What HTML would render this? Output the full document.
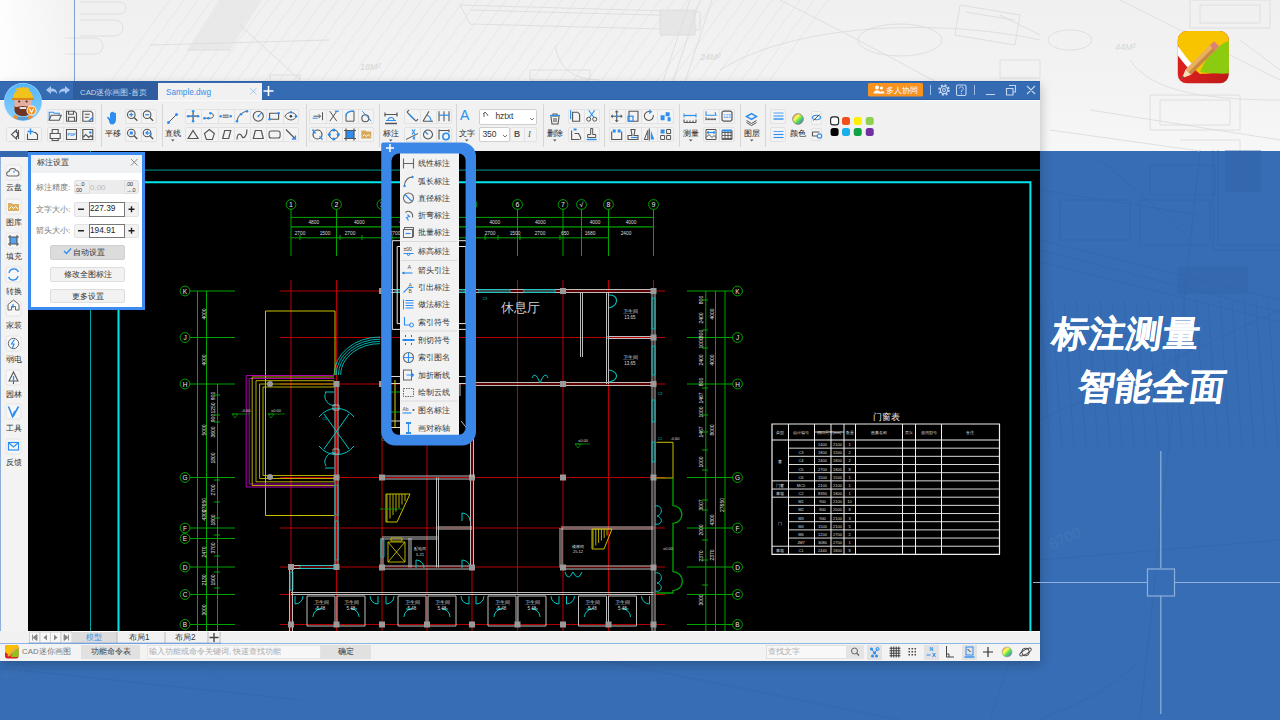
<!DOCTYPE html>
<html><head><meta charset="utf-8"><style>
*{margin:0;padding:0;box-sizing:border-box}
html,body{width:1280px;height:720px;overflow:hidden}
body{position:relative;font-family:"Liberation Sans",sans-serif;background:#376db4;color:#333}
.a{position:absolute}
svg{position:absolute;left:0;top:0;overflow:visible}
.tb{position:absolute;height:15px;border:1px solid #e2e2e2;background:#f3f3f3;border-radius:2px}
.tb i{position:absolute;top:0;bottom:0;border-left:1px solid #e2e2e2}
.lbl{position:absolute;font-size:9.5px;color:#222;white-space:nowrap;line-height:10px}
.sep{position:absolute;top:104px;height:43px;border-left:1px solid #d6d6d6}
.mi{position:absolute;left:400px;width:58px;height:17px;font-size:9px;color:#333;line-height:17px;padding-left:18px;white-space:nowrap}

</style></head><body>
<div class="a" style="left:0;top:0;width:1280px;height:151px;background:linear-gradient(180deg,#f0f0f0 0%,#f3f3f3 60%,#f7f7f7 100%)"></div>
<svg width="1280" height="151">
<defs><linearGradient id="wg" x1="0" y1="0" x2="1" y2="0"><stop offset="0" stop-color="#fff" stop-opacity="1"/><stop offset="1" stop-color="#fff" stop-opacity="0"/></linearGradient>
<linearGradient id="wg2" x1="0" y1="0" x2="0" y2="1"><stop offset="0" stop-color="#fff" stop-opacity="0"/><stop offset="1" stop-color="#fff" stop-opacity="0.6"/></linearGradient></defs>
<g stroke="#e3e3e3" stroke-width="0.8" fill="none">
<path d="M60 151 L170 0 M74 151 L184 0 M88 151 L198 0 M102 151 L212 0 M116 151 L226 0 M130 151 L240 0 M144 151 L254 0 M158 151 L268 0 M172 151 L282 0 M186 151 L296 0 M200 151 L310 0 M214 151 L324 0 M228 151 L338 0 M242 151 L352 0 M256 151 L366 0 M270 151 L380 0 M284 151 L394 0 M298 151 L408 0 M312 151 L422 0 M326 151 L436 0 M340 151 L450 0 M354 151 L464 0 M368 151 L478 0 M382 151 L492 0 M396 151 L506 0 M410 151 L520 0 M424 151 L534 0 M438 151 L548 0 M452 151 L562 0 M466 151 L576 0 M480 151 L590 0 M494 151 L604 0 M508 151 L618 0 M522 151 L632 0 M536 151 L646 0 M550 151 L660 0 M564 151 L674 0 M578 151 L688 0 M592 151 L702 0 M606 151 L716 0 M620 151 L730 0 M634 151 L744 0 M648 151 L758 0 M662 151 L772 0 M676 151 L786 0 M690 151 L800 0 M704 151 L814 0 M718 151 L828 0"/>
</g>
<path d="M219 0 H262 L230 50 H187 Z" fill="#e6e6e6" opacity="0.7"/>
<g stroke="#dcdcdc" stroke-width="0.9" fill="none">
<path d="M187 50 H230 M150 45 L330 40"/>
<path d="M80 2 h40 a6 6 0 0 1 0 12 h-40 M80 20 h35 a8 8 0 0 1 0 16 h-35 M65 38 h30 a8 8 0 0 1 0 16 h-30"/>
<path d="M240 25 L300 80 M270 75 h30 v6 h-30z"/>
<path d="M460 5 L700 12 V30 L470 24 Z M470 10 L690 16" />
<path d="M660 10 h35 v25 h-35z" fill="#e6e6e6"/>
<path d="M530 70 h60 v10 h-60z M555 45 Q560 80 600 80"/>
<path d="M690 0 L640 151 M700 0 L650 151 M712 0 L662 151"/>
<path d="M780 0 Q900 60 1040 140 M720 70 C800 20 950 20 1040 40"/>
<ellipse cx="900" cy="40" rx="42" ry="16"/>
<path d="M960 5 l60 10 l-5 30 l-60 -10z M965 12 l50 8 M1000 15 l40 20"/>
<path d="M970 95 h60 v22 h-60z M980 100 h40 M1000 60 h40 v18 h-40z"/>
<ellipse cx="1070" cy="40" rx="22" ry="10"/>
<path d="M1120 0 L1280 80 M1090 110 L1280 140 M1150 95 h90 v35 h-90z M1160 100 h70 v25 h-70z M1190 0 h80 v28 h-80z M1200 5 h60 v18 h-60z M1240 40 L1280 70 M1130 60 C1150 90 1200 100 1280 100"/>
<path d="M1050 130 L1200 151 M1180 140 h60 v11"/>
</g>
<text x="940" y="100" font-size="9" fill="#d6d6d6" font-family="Liberation Sans" font-style="italic">24M²</text>
<text x="360" y="70" font-size="9" fill="#d6d6d6" font-family="Liberation Sans" font-style="italic">18M²</text>
<text x="700" y="60" font-size="9" fill="#d6d6d6" font-family="Liberation Sans" font-style="italic">24M²</text>
<text x="1115" y="50" font-size="9" fill="#d6d6d6" font-family="Liberation Sans" font-style="italic">44M²</text>
<rect x="0" y="0" width="80" height="151" fill="url(#wg)" opacity="0.9"/>
<path d="M74.5 0 V81" stroke="#7fa0d0" stroke-width="1"/>
</svg>
<svg width="1280" height="720" style="top:0">
<g stroke="#2f62a6" stroke-width="1" fill="none" opacity="0.4">
<path d="M1040 240 L1280 300 M1040 250 L1280 312 M1040 262 L1280 322 M1040 190 L1200 215 M1100 160 C1150 200 1180 230 1200 250"/>
<path d="M1213 150 V250 H1280 M1218 150 V245 H1280 M1150 165 h65 v30 h-65z M1140 200 h70 v45 h-70z M1060 200 h70 v40 h-70z"/>
<path d="M1040 300 L1050 450 M1052 300 L1062 450 M1064 300 L1074 450 M1076 300 L1086 450 M1088 300 L1098 450 M1100 300 L1110 450 M1112 300 L1122 450 M1124 300 L1134 450 M1136 300 L1146 450 M1148 300 L1158 450 M1160 300 L1170 450 M1172 300 L1182 450 M1184 300 L1194 450 M1196 300 L1206 450 M1208 300 L1218 450 M1220 300 L1230 450 M1232 300 L1242 450 M1244 300 L1254 450 M1256 300 L1266 450 M1268 300 L1278 450"/>
<path d="M1040 420 L1280 310 M1200 150 L1140 720 M1040 560 L1280 540"/>
<path d="M0 668 L300 700 M200 660 L260 720 M600 660 L900 720 M1010 660 L990 720 M1140 660 C1100 700 1060 710 1040 720"/>
</g>
<rect x="1225" y="150" width="36" height="42" fill="#3062a6" opacity="0.4"/>
<rect x="1177" y="267" width="71" height="27" fill="#3264a8" opacity="0.4"/>
<text x="1052" y="550" font-size="15" fill="#4274b8" transform="rotate(-25 1052 550)" font-family="Liberation Sans">8700</text>
<text x="2" y="680" font-size="14" fill="#3f70b2" transform="rotate(-10 2 680)" font-family="Liberation Sans">400</text>
</svg>
<!-- window -->
<div class="a" style="left:0;top:81px;width:1040px;height:579px;background:#f1f1f1;box-shadow:1px 4px 10px rgba(0,0,0,0.22)"></div><div class="a" style="left:0;top:99.5px;width:1040px;height:1px;background:#fbfbfb"></div>
<div class="a" style="left:0;top:81px;width:1040px;height:18.5px;background:#356bb3;border-top:1px solid #2d62ab;border-bottom:1px solid #2d62ab"></div>
<div class="a" style="left:73px;top:82px;width:85px;height:17px;background:#2e5c9c"></div>
<div class="a" style="left:80px;top:83.5px;height:17px;line-height:17px;font-size:7.8px;color:#c9d6ea;white-space:nowrap">CAD迷你画图-首页</div>
<div class="a" style="left:158px;top:83px;width:104px;height:16.5px;background:#f1f1f1"></div>
<div class="a" style="left:166px;top:84.5px;height:16px;line-height:16px;font-size:8.2px;color:#3a8ee8;white-space:nowrap">Sample.dwg</div>
<svg width="1280" height="720">
<g stroke="#a8c8f0" stroke-width="1" fill="none"><path d="M250 88 L256.5 94.5 M256.5 88 L250 94.5"/></g>
<g stroke="#fff" stroke-width="1.6"><path d="M263.5 91 H273.5 M268.5 86 V96"/></g>
<!-- undo redo -->
<path d="M46 90 L51 86 V88.5 C55 88.5 57 90 57 94 C55.5 91.5 54 91.5 51 91.5 V94 Z" fill="#a8c6f0"/>
<path d="M70 90 L65 86 V88.5 C61 88.5 59 90 59 94 C60.5 91.5 62 91.5 65 91.5 V94 Z" fill="#a8c6f0"/>
<!-- avatar --><defs><clipPath id="av"><circle cx="23" cy="102" r="18.5"/></clipPath>
<linearGradient id="avg" x1="0" y1="0" x2="0" y2="1"><stop offset="0" stop-color="#4fb2f8"/><stop offset="1" stop-color="#8fd2ff"/></linearGradient></defs>
<circle cx="23" cy="102" r="19" fill="#a6dcff"/>
<g clip-path="url(#av)">
<rect x="0" y="80" width="46" height="45" fill="url(#avg)"/>
<path d="M12 122 C12 115 34 115 34 122Z" fill="#5a9ad8"/>
<path d="M12 122 L14 115 L18 116 L17 122Z M34 122 L32 115 L28 116 L29 122Z" fill="#f0902a"/>
<path d="M14.5 100 H31.5 V108 C31.5 118 14.5 118 14.5 108Z" fill="#e6ae9e"/>
<path d="M14.5 105 C15 109 18 106 23 106 C28 106 31 109 31.5 105 V110 C31 118 15 118 14.5 110Z" fill="#6e3424"/>
<rect x="19.5" y="107" width="7" height="2" rx="1" fill="#e8e8e8"/>
<circle cx="19.2" cy="101.5" r="1.1" fill="#333"/><circle cx="26.6" cy="101.5" r="1.1" fill="#333"/>
<path d="M13 98.5 C13 85.5 33 85.5 33 98.5Z" fill="#f2c21c"/>
<path d="M15 90 l1.5 -2 l1.5 1 l1.5 -2 l2 1 l2 -1.5 l2 1.5 l2 -1 l1.5 2 l1.5 1" fill="#f2c21c"/>
<path d="M12 98 H34 V100 H12Z" fill="#d9861a"/>
</g>
<circle cx="31.5" cy="110.5" r="5" fill="#fff"/><circle cx="31.5" cy="110.5" r="4.1" fill="#f7931e"/>
<path d="M29.3 108.6 L31.5 112.6 L33.7 108.6" stroke="#fff" stroke-width="1.1" fill="none"/>
<!-- right controls -->
<rect x="868" y="83" width="55" height="13.5" rx="1.5" fill="#f7931e"/>
<g fill="#fff"><circle cx="877" cy="87.5" r="2"/><path d="M873.5 93.5 C873.5 89 880.5 89 880.5 93.5Z"/><circle cx="881.5" cy="88" r="1.6"/><path d="M879.5 93.5 C880 90 884.5 90 884.5 93.5Z"/></g>
<path d="M930.5 85 V95 M974.5 85 V95" stroke="#9cbbe4" stroke-width="1"/>
<g stroke="#c4d6f0" stroke-width="1.1" fill="none">
<circle cx="944" cy="90" r="4.8" stroke-width="2" stroke-dasharray="1.9 1.87"/>
<circle cx="944" cy="90" r="3.6"/><circle cx="944" cy="90" r="1.5"/>
<rect x="956.5" y="85" width="9.5" height="10.5" rx="1.5"/>
<path d="M959.3 88.5 C959.3 86.3 963.3 86.3 963.3 88.5 C963.3 90 961.3 90 961.3 92" stroke-width="1"/>
<path d="M986 94.5 H995 M1006.5 88.5 h6.5 v6.5 h-6.5z M1009 85.5 h6.5 v6.5 h-2.5 M1027 86 L1035 94 M1035 86 L1027 94"/>
</g>
<circle cx="961.3" cy="93.7" r="0.6" fill="#c4d6f0"/>
</svg>
<div class="a" style="left:886px;top:84px;height:13.5px;line-height:13.5px;font-size:8.2px;color:#fff;white-space:nowrap">多人协同</div>
<div class="tb" style="left:5.5px;top:126.8px;width:36.0px;height:15.399999999999991px"><i style="left:17.0px"></i></div><div class="tb" style="left:47px;top:108.5px;width:49px;height:15.299999999999997px"><i style="left:15.3px"></i><i style="left:31.7px"></i></div><div class="tb" style="left:47px;top:126.8px;width:49px;height:15.399999999999991px"><i style="left:15.3px"></i><i style="left:31.7px"></i></div><div class="sep" style="left:101px"></div><div class="lbl" style="left:105px;top:128.5px;font-size:8px">平移</div><div class="tb" style="left:124.8px;top:108.5px;width:31.799999999999997px;height:15.299999999999997px"><i style="left:14.9px"></i></div><div class="tb" style="left:124.8px;top:126.8px;width:31.799999999999997px;height:15.399999999999991px"><i style="left:14.9px"></i></div><div class="sep" style="left:161.5px"></div><div class="lbl" style="left:165px;top:128.5px;font-size:8px">直线</div><div class="tb" style="left:185px;top:108.5px;width:114px;height:15.299999999999997px"><i style="left:15.3px"></i><i style="left:31.6px"></i><i style="left:47.9px"></i><i style="left:64.1px"></i><i style="left:80.4px"></i><i style="left:96.7px"></i></div><div class="tb" style="left:185px;top:126.8px;width:114px;height:15.399999999999991px"><i style="left:15.3px"></i><i style="left:31.6px"></i><i style="left:47.9px"></i><i style="left:64.1px"></i><i style="left:80.4px"></i><i style="left:96.7px"></i></div><div class="sep" style="left:305.6px"></div><div class="tb" style="left:309.4px;top:108.5px;width:65.0px;height:15.299999999999997px"><i style="left:15.2px"></i><i style="left:31.5px"></i><i style="left:47.8px"></i></div><div class="tb" style="left:309.4px;top:126.8px;width:65.0px;height:15.399999999999991px"><i style="left:15.2px"></i><i style="left:31.5px"></i><i style="left:47.8px"></i></div><div class="sep" style="left:379.4px"></div><div class="lbl" style="left:383px;top:128.5px;font-size:8px">标注</div><div class="tb" style="left:404px;top:108.5px;width:48px;height:15.299999999999997px"><i style="left:15.0px"></i><i style="left:31.0px"></i></div><div class="tb" style="left:404px;top:126.8px;width:48px;height:15.399999999999991px"><i style="left:15.0px"></i><i style="left:31.0px"></i></div><div class="sep" style="left:455.6px"></div><div class="a" style="left:460px;top:107px;font-size:14px;color:#2b8ef0;line-height:16px">A</div><div class="lbl" style="left:459px;top:128.5px;font-size:8px">文字</div><div class="a" style="left:479.4px;top:109.2px;width:58px;height:15.7px;background:#fff;border:1px solid #cfcfcf;border-radius:2px;font-size:8.5px;line-height:13.5px;padding-left:15px;color:#333">hztxt</div><div class="a" style="left:479.4px;top:127.4px;width:31px;height:15px;background:#fff;border:1px solid #cfcfcf;border-radius:2px;font-size:8.5px;line-height:13px;padding-left:2px;color:#333">350</div><div class="tb" style="left:510.4px;top:127.4px;width:27.100000000000023px;height:15.0px"><i style="left:12.6px"></i></div><div class="a" style="left:514px;top:129px;font-size:8.5px;color:#555;font-weight:bold">B</div><div class="a" style="left:528px;top:129px;font-size:8.5px;color:#555;font-style:italic;font-family:'Liberation Serif',serif">I</div><div class="sep" style="left:542.5px"></div><div class="lbl" style="left:547px;top:128.5px;font-size:8px">删除</div><div class="tb" style="left:567.5px;top:108.5px;width:32.25px;height:15.299999999999997px"><i style="left:15.1px"></i></div><div class="tb" style="left:567.5px;top:126.8px;width:32.25px;height:15.399999999999991px"><i style="left:15.1px"></i></div><div class="sep" style="left:604px"></div><div class="tb" style="left:608.5px;top:108.5px;width:65.25px;height:15.299999999999997px"><i style="left:15.3px"></i><i style="left:31.6px"></i><i style="left:47.9px"></i></div><div class="tb" style="left:608.5px;top:126.8px;width:65.25px;height:15.399999999999991px"><i style="left:15.3px"></i><i style="left:31.6px"></i><i style="left:47.9px"></i></div><div class="sep" style="left:678.75px"></div><div class="lbl" style="left:683px;top:128.5px;font-size:8px">测量</div><div class="tb" style="left:703px;top:108.5px;width:32px;height:15.299999999999997px"><i style="left:15.0px"></i></div><div class="tb" style="left:703px;top:126.8px;width:32px;height:15.399999999999991px"><i style="left:15.0px"></i></div><div class="sep" style="left:740px"></div><div class="lbl" style="left:744px;top:128.5px;font-size:8px">图层</div><div class="sep" style="left:765px"></div><div class="tb" style="left:770.4px;top:108.5px;width:16.100000000000023px;height:15.299999999999997px"></div><div class="tb" style="left:770.4px;top:126.8px;width:16.100000000000023px;height:15.399999999999991px"></div><div class="lbl" style="left:790px;top:128.5px;font-size:8px">颜色</div><div class="tb" style="left:810.6px;top:110.5px;width:11.899999999999977px;height:14.0px"></div><div class="tb" style="left:810.6px;top:128px;width:11.899999999999977px;height:12.5px"></div><svg width="1280" height="720"><g transform="translate(14.5,134.5)"><path d="M4 -4.5 V4.5 M2 -4.5 L-3 0 L2 4.5 V2 H3 V-2 H2Z" stroke="#555" stroke-width="1.1" fill="none"/></g><g transform="translate(32.5,134.5)"><path d="M-5 -1 V5 H5 V0 L3 -2 H1" stroke="#555" stroke-width="1.1" fill="none"/><path d="M-2 -6 V0 M-5 -3 H1" stroke="#2b8ef0" stroke-width="1.4" fill="none"/></g><g transform="translate(55.2,116.2)"><path d="M-6 4 V-4 H-2 L-1 -3 H4 V-1" stroke="#2b8ef0" stroke-width="1.1" fill="none"/><path d="M-6 4 L-4 -1 H6 L4 4Z" stroke="#555" stroke-width="1.1" fill="none"/></g><g transform="translate(71.5,116.2)"><path d="M-5 -5 H3 L5 -3 V5 H-5Z M-3 -5 V-2 H2 V-5 M-3 5 V1 H3 V5" stroke="#555" stroke-width="1.1" fill="none"/></g><g transform="translate(87.8,116.2)"><path d="M-5 -5 H3 L5 -3 V5 H-5Z M-3 -2 H2 M-3 1 H1" stroke="#555" stroke-width="1.1" fill="none"/><path d="M1 5 L5 1" stroke="#2b8ef0" stroke-width="1.5" fill="none"/></g><g transform="translate(55.2,134.5)"><path d="M-5 -1 H5 V4 H-5Z M-3 -1 V-5 H3 V-1 M-3 4 V6 H3 V4" stroke="#555" stroke-width="1.1" fill="none"/></g><g transform="translate(71.5,134.5)"><path d="M-5 -5 H5 V5 H-5Z" stroke="#555" stroke-width="1.1" fill="none"/><text x="-4" y="1.5" font-size="4" fill="#2b8ef0" font-family="Liberation Sans" font-weight="bold">PDF</text></g><g transform="translate(87.8,134.5)"><path d="M-5 -5 H5 V5 H-5Z M-5 3 L-2 0 L1 3 L3 1 L5 3" stroke="#555" stroke-width="1.1" fill="none"/><circle cx="2.5" cy="-2" r="1.3" fill="#2b8ef0"/></g><g transform="translate(113.0,118.5)"><path d="M-4 2 L-6 -1 L-5 -2 L-3 0 V-5 C-3 -6 -2 -6 -2 -5 V-2 V-6 C-2 -7 -1 -7 -1 -6 V-2 V-6 C-1 -7 1 -7 1 -6 V-2 V-5 C1 -6 3 -6 3 -5 V1 C3 4 1 6 -1 6 C-3 6 -4 4 -4 2Z" fill="#2b8ef0"/></g><g transform="translate(132.8,116.2)"><path d="M1 1 L4.5 4.5" stroke="#555" stroke-width="1.4" fill="none"/><circle cx="-1.5" cy="-1.5" r="3.8" stroke="#555" stroke-width="1.1" fill="none"/><path d="M-3.5 -1.5 H0.5 M-1.5 -3.5 V0.5" stroke="#2b8ef0" stroke-width="1.3" fill="none"/></g><g transform="translate(148.6,116.2)"><path d="M1 1 L4.5 4.5" stroke="#555" stroke-width="1.4" fill="none"/><circle cx="-1.5" cy="-1.5" r="3.8" stroke="#555" stroke-width="1.1" fill="none"/><path d="M-3.5 -1.5 H0.5" stroke="#2b8ef0" stroke-width="1.3" fill="none"/></g><g transform="translate(132.8,134.5)"><path d="M1 1 L4.5 4.5" stroke="#555" stroke-width="1.4" fill="none"/><circle cx="-1.5" cy="-1.5" r="3.8" stroke="#555" stroke-width="1.1" fill="none"/><rect x="-3" y="-3" width="3" height="3" fill="#2b8ef0"/></g><g transform="translate(148.6,134.5)"><path d="M1 1 L4.5 4.5" stroke="#555" stroke-width="1.4" fill="none"/><circle cx="-1.5" cy="-1.5" r="3.8" stroke="#555" stroke-width="1.1" fill="none"/><path d="M-3 -1.5 L-0.5 -3.5 M-3 -1.5 L-0.5 0 M-3 -1.5 H1 C2 -1.5 2.5 -0.5 2.5 1" stroke="#2b8ef0" stroke-width="1.2" fill="none"/></g><g transform="translate(172.5,118.5)"><path d="M-4 4 L4 -4" stroke="#555" stroke-width="1" fill="none"/><circle cx="-4" cy="4" r="1.5" fill="#2b8ef0"/><circle cx="4" cy="-4" r="1.5" fill="#2b8ef0"/></g><path d="M171 139.5 h3.5 l-1.75 2z" fill="#555"/><g transform="translate(193.1,116.2)"><path d="M0 -5 V5 M-5 0 H5" stroke="#555" stroke-width="1.2" fill="none"/><circle cx="0" cy="-5" r="1.3" fill="#2b8ef0"/><circle cx="0" cy="5" r="1.3" fill="#2b8ef0"/><circle cx="-5" cy="0" r="1.3" fill="#2b8ef0"/><circle cx="5" cy="0" r="1.3" fill="#2b8ef0"/><circle cx="0" cy="0" r="1.3" fill="#2b8ef0"/></g><g transform="translate(209.4,116.2)"><path d="M-5 2 H1 M1 -3 C5 -3 5 2 1 2" stroke="#555" stroke-width="1" fill="none"/><circle cx="-5" cy="2" r="1.3" fill="#2b8ef0"/><circle cx="-1" cy="2" r="1.3" fill="#2b8ef0"/><circle cx="1" cy="-3" r="1.3" fill="#2b8ef0"/></g><g transform="translate(225.7,116.2)"><path d="M-3 -1 H3 M-3 1 H3" stroke="#555" stroke-width="1" fill="none"/><circle cx="-5" cy="0" r="1.3" fill="#2b8ef0"/><circle cx="5" cy="0" r="1.3" fill="#2b8ef0"/></g><g transform="translate(242.0,116.2)"><path d="M-5 5 C-4 -1 0 -4 5 -5" stroke="#555" stroke-width="1" fill="none"/><circle cx="-5" cy="5" r="1.3" fill="#2b8ef0"/><circle cx="-1" cy="-2" r="1.3" fill="#2b8ef0"/><circle cx="5" cy="-5" r="1.3" fill="#2b8ef0"/></g><g transform="translate(258.3,116.2)"><circle r="5" stroke="#555" stroke-width="1.1" fill="none"/><path d="M0 0 L3 -3" stroke="#2b8ef0" stroke-width="1.1" fill="none"/><circle cx="0" cy="0" r="1" fill="#2b8ef0"/></g><g transform="translate(274.6,116.2)"><path d="M-5 -3 H4 V3 H-5Z" stroke="#555" stroke-width="1.1" fill="none"/><circle cx="-5" cy="3" r="1.3" fill="#2b8ef0"/><circle cx="4" cy="-3" r="1.3" fill="#2b8ef0"/></g><g transform="translate(290.9,116.2)"><path d="M-6 0 C-3 -5 3 -5 6 0 C3 5 -3 5 -6 0Z" stroke="#555" stroke-width="1" fill="none"/><circle cx="0" cy="0" r="1.3" fill="#333"/><circle cx="0" cy="-4" r="1.2" fill="#2b8ef0"/><circle cx="5" cy="0" r="1.2" fill="#2b8ef0"/></g><g transform="translate(193.1,134.5)"><path d="M0 -4 L5 4 H-5Z" stroke="#555" stroke-width="1.2" fill="none"/></g><g transform="translate(209.4,134.5)"><path d="M0 -5 L5 -1 L3 5 H-3 L-5 -1Z" stroke="#555" stroke-width="1.1" fill="none"/></g><g transform="translate(225.7,134.5)"><path d="M-3 4 L-1 -4 H5 L3 4Z" stroke="#555" stroke-width="1.2" fill="none"/></g><g transform="translate(242.0,134.5)"><path d="M-5 5 C-5 -2 -1 -1 0 2 C1 5 5 2 5 -5" stroke="#555" stroke-width="1.2" fill="none"/></g><g transform="translate(258.3,134.5)"><path d="M-3 -4 H3 L5 4 H-5Z" stroke="#555" stroke-width="1.2" fill="none"/></g><g transform="translate(274.6,134.5)"><rect x="-5.5" y="-3.5" width="11" height="7" rx="2" stroke="#555" stroke-width="1.1" fill="none"/></g><g transform="translate(290.9,134.5)"><path d="M-5 -5 L4 4" stroke="#555" stroke-width="1.1" fill="none"/><path d="M1 4.5 H4.5 V1" stroke="#2b8ef0" stroke-width="1.4" fill="none"/></g><g transform="translate(317.5,116.2)"><path d="M-4 0 H3 M1 -2 L3 0 L1 2 M5 -4 V4" stroke="#555" stroke-width="1" fill="none"/><path d="M-5 2 H0" stroke="#2b8ef0" stroke-width="1" fill="none"/></g><g transform="translate(333.8,116.2)"><path d="M-4 -5 L3 5 M3 -5 L-4 5" stroke="#555" stroke-width="1" fill="none"/><path d="M1 -5 H5" stroke="#2b8ef0" stroke-width="1.2" fill="none"/></g><g transform="translate(350.0,116.2)"><path d="M-4 5 V-1 C-4 -4 -1 -5 4 -5 V5Z" stroke="#555" stroke-width="1" fill="none"/><path d="M-4 0 C-4 -4 -1 -5 4 -5" stroke="#2b8ef0" stroke-width="1.2" fill="none"/></g><g transform="translate(366.3,116.2)"><circle cx="-1" cy="2" r="3.5" stroke="#555" stroke-width="1.1" fill="none"/><path d="M-4 -5 L5 5" stroke="#2b8ef0" stroke-width="1" fill="none"/></g><g transform="translate(317.5,134.5)"><circle r="4.5" stroke="#555" stroke-width="1.2" fill="none"/><path d="M-5 -5 L-2 -1 M5 5 L2 2" stroke="#2b8ef0" stroke-width="1.4" fill="none"/></g><g transform="translate(333.8,134.5)"><circle r="4.5" stroke="#555" stroke-width="1.2" fill="none"/><circle cx="-4.5" cy="0" r="1.6" fill="#2b8ef0"/><circle cx="4.5" cy="0" r="1.6" fill="#2b8ef0"/><circle cx="0" cy="-4.5" r="1.6" fill="#2b8ef0"/><circle cx="0" cy="4.5" r="1.6" fill="#2b8ef0"/></g><g transform="translate(350.0,134.5)"><rect x="-4" y="-4" width="8" height="8" fill="#2b8ef0"/><path d="M-6 -4 H6 M-6 4 H6 M-4 -6 V6 M4 -6 V6" stroke="#555" stroke-width="1.2" fill="none"/></g><g transform="translate(366.3,134.5)"><path d="M-5 -4 H-1 L0 -3 H5 V4 H-5Z" fill="#d8a858"/><path d="M-4 2 L-2 0 L0 2 L2 0 L4 2" stroke="#fff" stroke-width="1" fill="none"/></g><g transform="translate(391.0,118.5)"><path d="M-6 -4 H6 M-6 -6 V-2 M6 -6 V-2" stroke="#555" stroke-width="1.2" fill="none"/><path d="M-3 2 C-3 -2 3 -2 3 2 M-5 2 H5" stroke="#2b8ef0" stroke-width="1.1" fill="none"/><path d="M-6 5 H6" stroke="#555" stroke-width="1.5" fill="none"/></g><path d="M389 139.5 h3.5 l-1.75 2z" fill="#555"/><g transform="translate(412.0,116.2)"><path d="M-5 -4 L4 5 M-5 -4 L-3 -6 M4 5 L6 3" stroke="#555" stroke-width="1.1" fill="none"/><path d="M-3 -2 L2 3" stroke="#2b8ef0" stroke-width="1.4" fill="none"/></g><g transform="translate(428.0,116.2)"><path d="M-5 5 H5 M-5 5 L1 -5" stroke="#555" stroke-width="1.1" fill="none"/><path d="M-1 -1 C2 0 3 2 3 5" stroke="#2b8ef0" stroke-width="1.2" fill="none"/></g><g transform="translate(444.0,116.2)"><path d="M-5 -5 V5 M0 -5 V5 M5 -5 V5" stroke="#555" stroke-width="1.1" fill="none"/><path d="M-5 -1 H5" stroke="#2b8ef0" stroke-width="1.2" fill="none"/></g><g transform="translate(412.0,134.5)"><path d="M-6 5 L6 -1" stroke="#555" stroke-width="1" fill="none"/><path d="M0 -5 L3 0 M3 -5 L0 0 M1 2 L3 5 M3 2 L1 5" stroke="#2b8ef0" stroke-width="1.1" fill="none"/></g><g transform="translate(428.0,134.5)"><circle r="4.5" stroke="#555" stroke-width="1.1" fill="none"/><path d="M0 0 L-3 -3" stroke="#2b8ef0" stroke-width="1.2" fill="none"/></g><g transform="translate(444.0,134.5)"><path d="M-5 -5 V5 M5 -5 V-2 M-5 -4 H5" stroke="#555" stroke-width="1.1" fill="none"/><circle cx="2" cy="2" r="3.2" fill="none" stroke="#2b8ef0" stroke-width="1.6"/></g><path d="M465 139.5 h3.5 l-1.75 2z" fill="#555"/><path d="M530 118 l2 2 l2 -2" stroke="#555" stroke-width="0.8" fill="none"/><path d="M503 135 l2 2 l2 -2" stroke="#555" stroke-width="0.8" fill="none"/><path d="M483 114 l2 -2 l2 2 M484 113 v4 M487 114 l1 2" stroke="#555" stroke-width="0.9" fill="none"/><g transform="translate(555.0,119.0)"><path d="M-5 -3 H5 M-2 -3 V-5 H2 V-3 M-4 -2 L-3 5 H3 L4 -2 M-1 -1 V3 M1 -1 V3" stroke="#555" stroke-width="1.1" fill="none"/><path d="M-5 -3.5 H5" stroke="#2b8ef0" stroke-width="1.3" fill="none"/></g><path d="M553 139.5 h3.5 l-1.75 2z" fill="#555"/><g transform="translate(575.6,116.2)"><path d="M-3 -4 H2 L4 -2 V5 H-3Z" stroke="#555" stroke-width="1.1" fill="none"/><path d="M-5 -6 V3" stroke="#2b8ef0" stroke-width="1.2" fill="none"/></g><g transform="translate(591.7,116.2)"><path d="M-3 -6 L2 1 M3 -6 L-2 1" stroke="#2b8ef0" stroke-width="1.1" fill="none"/><circle cx="-3" cy="3" r="2" stroke="#555" fill="none"/><circle cx="3" cy="3" r="2" stroke="#555" fill="none"/></g><g transform="translate(575.6,134.5)"><path d="M-4 -4 V5 H4 M-1 -1 H3 L5 3 V5" stroke="#555" stroke-width="1.1" fill="none"/><rect x="-2" y="-6" width="3" height="2" fill="#2b8ef0"/></g><g transform="translate(591.7,134.5)"><path d="M-1 -6 H1 V0 H4 V3 H-4 V0 H-1Z" stroke="#555" stroke-width="1" fill="none"/><path d="M-5 5 H5" stroke="#2b8ef0" stroke-width="1.4" fill="none"/></g><g transform="translate(616.7,116.2)"><path d="M-5 0 H5 M0 -5 V5" stroke="#555" stroke-width="1.1" fill="none"/><path d="M-6 0 l2 -2 v4z M6 0 l-2 -2 v4z M0 -6 l-2 2 h4z M0 6 l-2 -2 h4z" fill="#555"/><circle cx="0" cy="0" r="1.2" fill="#2b8ef0"/></g><g transform="translate(633.0,116.2)"><path d="M-4 -5 H5 V5 H-4Z" stroke="#555" stroke-width="1.1" fill="none"/><rect x="-5" y="0" width="5" height="5" fill="none" stroke="#2b8ef0" stroke-width="1.2"/></g><g transform="translate(649.3,116.2)"><path d="M4 -1 A4.5 4.5 0 1 1 1 -4.5" stroke="#555" stroke-width="1.1" fill="none"/><path d="M0 -7 L3 -4.5 L0 -2Z" fill="#2b8ef0"/></g><g transform="translate(665.6,116.2)"><path d="M-5 -1 h4 v5 h-4z M0 -4 h4 v4 h-4z M2 1 h3 v4 h-3z" fill="#2b8ef0"/></g><g transform="translate(616.7,134.5)"><path d="M-5 -3 V5 H5 V-3" stroke="#555" stroke-width="1.1" fill="none"/><rect x="-4" y="-5" width="3" height="3" fill="#2b8ef0"/><rect x="1" y="-5" width="3" height="3" fill="#2b8ef0"/></g><g transform="translate(633.0,134.5)"><path d="M-5 5 V1 H-1 L-2 -5 H2 L1 1 H5 V5Z" stroke="#555" stroke-width="1.1" fill="none"/><path d="M-2 3 H5" stroke="#2b8ef0" stroke-width="1.2" fill="none"/></g><g transform="translate(649.3,134.5)"><path d="M0 -6 V6" stroke="#555" stroke-width="1.1" fill="none"/><path d="M-1.5 -4 L-5 5 H-1.5Z" fill="none" stroke="#555"/><path d="M1.5 -4 L5 5 H1.5Z" fill="#2b8ef0"/></g><g transform="translate(665.6,134.5)"><rect x="-5" y="-5" width="4" height="4" fill="#2b8ef0"/><path d="M1 -5 h4 v4 h-4z M-5 1 h4 v4 h-4z M1 1 h4 v4 h-4z" stroke="#555" stroke-width="1" fill="none"/></g><g transform="translate(690.0,118.5)"><path d="M-6 -3 H6" stroke="#2b8ef0" stroke-width="1.2" fill="none"/><path d="M-6 -5 V-1 M6 -5 V-1" stroke="#2b8ef0" stroke-width="1" fill="none"/><path d="M-6 4 H6 M-6 1 V4 M-3 2 V4 M0 2 V4 M3 2 V4 M6 1 V4" stroke="#555" stroke-width="1.1" fill="none"/></g><path d="M689 139.5 h3.5 l-1.75 2z" fill="#555"/><g transform="translate(711.0,116.2)"><path d="M-5 -5 V-1 H5 L4 -4" stroke="#2b8ef0" stroke-width="1.1" fill="none"/><path d="M-5 3 H5 M-5 1 V4 M-2 2 V4 M1 2 V4 M4 2 V4" stroke="#555" stroke-width="1.1" fill="none"/></g><g transform="translate(727.0,116.2)"><rect x="-5" y="-5" width="10" height="10" rx="2" stroke="#555" stroke-width="1.2" fill="none"/><text x="-3.7" y="1.8" font-size="4.5" fill="#2b8ef0" font-family="Liberation Sans">123</text></g><g transform="translate(711.0,134.5)"><path d="M-5 -5 H5 V5 H-5Z M-5 3 L-2 0 L1 3 L3 1 L5 3" stroke="#555" stroke-width="1" fill="none"/><path d="M-3 -2 H3" stroke="#2b8ef0" stroke-width="1.2" fill="none"/><circle cx="-3" cy="-2" r="1.2" fill="#2b8ef0"/><circle cx="3" cy="-2" r="1.2" fill="#2b8ef0"/></g><g transform="translate(727.0,134.5)"><path d="M-5 -2 H5 M-5 1 H5 M-5 4 H5 M-2 -4 V5 M1 -4 V5 M4 -4 V5 M-5 -4 V5 H5 V-4" stroke="#555" stroke-width="0.9" fill="none"/><rect x="-5" y="-5" width="10" height="2" fill="#2b8ef0"/></g><g transform="translate(751.5,118.5)"><path d="M-5 2 L0 5 L5 2 M-5 4 L0 7 L5 4" stroke="#555" stroke-width="1" fill="none"/><path d="M-5 -2 L0 -5 L5 -2 L0 1Z" fill="none" stroke="#2b8ef0" stroke-width="1.5"/></g><path d="M750 139.5 h3.5 l-1.75 2z" fill="#555"/><g transform="translate(778.5,116.0)"><path d="M-5 -3 H5" stroke="#2b8ef0" stroke-width="0.8" fill="none"/><path d="M-5 0 H5" stroke="#2b8ef0" stroke-width="1" fill="none"/><path d="M-5 3 H5" stroke="#2b8ef0" stroke-width="1.4" fill="none"/></g><g transform="translate(778.5,134.5)"><path d="M-5 -3 H5" stroke="#2b8ef0" stroke-width="0.8" fill="none"/><path d="M-5 0 H5" stroke="#2b8ef0" stroke-width="1.1" fill="none"/><path d="M-5 3 H5" stroke="#2b8ef0" stroke-width="1.1" fill="none"/></g><defs><linearGradient id="cw" x1="0" y1="0" x2="1" y2="1"><stop offset="0" stop-color="#f55"/><stop offset=".35" stop-color="#ff5"/><stop offset=".6" stop-color="#5d5"/><stop offset="1" stop-color="#55f"/></linearGradient></defs><circle cx="798" cy="119" r="5.3" fill="url(#cw)" stroke="#777" stroke-width="0.8"/><g transform="translate(816.5,117.5)"><path d="M-4 0 C-4 -3 4 -3 4 0 C4 3 -4 3 -4 0" stroke="#2b8ef0" stroke-width="1.1" fill="none"/><path d="M-3 3 L3 -3" stroke="#555" stroke-width="1" fill="none"/></g><g transform="translate(816.5,134.0)"><path d="M-4 -2 H3 M-4 -2 V2 H1" stroke="#555" stroke-width="1" fill="none"/><circle cx="3" cy="2" r="2.2" fill="none" stroke="#2b8ef0" stroke-width="1.2"/></g><rect x="830.6" y="116.9" width="8" height="8" rx="2.5" fill="#fff" stroke="#222" stroke-width="1.1"/><rect x="842" y="116.9" width="8" height="8" rx="2.5" fill="#f04e1a"/><rect x="853.75" y="116.9" width="8" height="8" rx="2.5" fill="#ffef00"/><rect x="865.75" y="116.9" width="8" height="8" rx="2.5" fill="#8fd14f"/><rect x="830.6" y="128" width="8" height="8" rx="2.5" fill="#000"/><rect x="842" y="128" width="8" height="8" rx="2.5" fill="#18aeea"/><rect x="853.75" y="128" width="8" height="8" rx="2.5" fill="#10a544"/><rect x="865.75" y="128" width="8" height="8" rx="2.5" fill="#7030a0"/></svg><svg width="1280" height="720" font-family="Liberation Sans"><defs><clipPath id="cv"><rect x="28" y="151" width="1012" height="480"/></clipPath></defs><rect x="28" y="151" width="1012" height="480" fill="#000"/><g clip-path="url(#cv)"><line x1="28" y1="170.2" x2="1040" y2="170.2" stroke="#007a7a" stroke-width="1.3"/><line x1="90.5" y1="150" x2="90.5" y2="631" stroke="#00a4a4" stroke-width="1"/><path d="M118.5 631 V182.2 H1030.4 V631" stroke="#00e6ee" stroke-width="2" fill="none"/><line x1="280" y1="291" x2="665" y2="291" stroke="#b40000" stroke-width="1.1"/><line x1="280" y1="337.5" x2="665" y2="337.5" stroke="#b40000" stroke-width="1.1"/><line x1="280" y1="384" x2="665" y2="384" stroke="#b40000" stroke-width="1.1"/><line x1="280" y1="477.5" x2="665" y2="477.5" stroke="#b40000" stroke-width="1.1"/><line x1="280" y1="528" x2="665" y2="528" stroke="#b40000" stroke-width="1.1"/><line x1="280" y1="567" x2="665" y2="567" stroke="#b40000" stroke-width="1.1"/><line x1="280" y1="594.5" x2="665" y2="594.5" stroke="#b40000" stroke-width="1.1"/><line x1="280" y1="624.5" x2="665" y2="624.5" stroke="#b40000" stroke-width="1.1"/><line x1="291" y1="280" x2="291" y2="631" stroke="#b40000" stroke-width="1.1"/><line x1="336.5" y1="280" x2="336.5" y2="631" stroke="#b40000" stroke-width="1.1"/><line x1="382" y1="280" x2="382" y2="631" stroke="#b40000" stroke-width="1.1"/><line x1="427" y1="280" x2="427" y2="631" stroke="#b40000" stroke-width="1.1"/><line x1="472" y1="280" x2="472" y2="631" stroke="#b40000" stroke-width="1.1"/><line x1="517.5" y1="280" x2="517.5" y2="631" stroke="#b40000" stroke-width="1.1"/><line x1="563" y1="280" x2="563" y2="631" stroke="#b40000" stroke-width="1.1"/><line x1="608.5" y1="280" x2="608.5" y2="631" stroke="#b40000" stroke-width="1.1"/><line x1="653.5" y1="280" x2="653.5" y2="631" stroke="#b40000" stroke-width="1.1"/><circle cx="291" cy="204.5" r="4.9" stroke="#00a400" stroke-width="1" fill="none"/><text x="291" y="207" font-size="7" fill="#e8e8e8" text-anchor="middle">1</text><line x1="291" y1="209.5" x2="291" y2="256" stroke="#00a400" stroke-width="1"/><circle cx="336.5" cy="204.5" r="4.9" stroke="#00a400" stroke-width="1" fill="none"/><text x="336.5" y="207" font-size="7" fill="#e8e8e8" text-anchor="middle">2</text><line x1="336.5" y1="209.5" x2="336.5" y2="256" stroke="#00a400" stroke-width="1"/><circle cx="382" cy="204.5" r="4.9" stroke="#00a400" stroke-width="1" fill="none"/><text x="382" y="207" font-size="7" fill="#e8e8e8" text-anchor="middle">3</text><line x1="382" y1="209.5" x2="382" y2="256" stroke="#00a400" stroke-width="1"/><circle cx="427" cy="204.5" r="4.9" stroke="#00a400" stroke-width="1" fill="none"/><text x="427" y="207" font-size="7" fill="#e8e8e8" text-anchor="middle">4</text><line x1="427" y1="209.5" x2="427" y2="256" stroke="#00a400" stroke-width="1"/><circle cx="472" cy="204.5" r="4.9" stroke="#00a400" stroke-width="1" fill="none"/><text x="472" y="207" font-size="7" fill="#e8e8e8" text-anchor="middle">5</text><line x1="472" y1="209.5" x2="472" y2="256" stroke="#00a400" stroke-width="1"/><circle cx="517.5" cy="204.5" r="4.9" stroke="#00a400" stroke-width="1" fill="none"/><text x="517.5" y="207" font-size="7" fill="#e8e8e8" text-anchor="middle">6</text><line x1="517.5" y1="209.5" x2="517.5" y2="256" stroke="#00a400" stroke-width="1"/><circle cx="563" cy="204.5" r="4.9" stroke="#00a400" stroke-width="1" fill="none"/><text x="563" y="207" font-size="7" fill="#e8e8e8" text-anchor="middle">7</text><line x1="563" y1="209.5" x2="563" y2="256" stroke="#00a400" stroke-width="1"/><circle cx="581.5" cy="204.5" r="4.9" stroke="#00a400" stroke-width="1" fill="none"/><text x="581.5" y="207" font-size="7" fill="#e8e8e8" text-anchor="middle">√</text><line x1="581.5" y1="209.5" x2="581.5" y2="256" stroke="#00a400" stroke-width="1"/><circle cx="608.5" cy="204.5" r="4.9" stroke="#00a400" stroke-width="1" fill="none"/><text x="608.5" y="207" font-size="7" fill="#e8e8e8" text-anchor="middle">8</text><line x1="608.5" y1="209.5" x2="608.5" y2="256" stroke="#00a400" stroke-width="1"/><circle cx="653.5" cy="204.5" r="4.9" stroke="#00a400" stroke-width="1" fill="none"/><text x="653.5" y="207" font-size="7" fill="#e8e8e8" text-anchor="middle">9</text><line x1="653.5" y1="209.5" x2="653.5" y2="256" stroke="#00a400" stroke-width="1"/><line x1="291" y1="217.4" x2="653.5" y2="217.4" stroke="#00a400" stroke-width="1"/><line x1="291" y1="226.8" x2="653.5" y2="226.8" stroke="#00a400" stroke-width="1.2"/><line x1="291" y1="237.8" x2="608.5" y2="237.8" stroke="#00a400" stroke-width="1"/><text x="313.75" y="224" font-size="4.8" fill="#ddd" text-anchor="middle">4800</text><text x="359.25" y="224" font-size="4.8" fill="#ddd" text-anchor="middle">4000</text><text x="404.5" y="224" font-size="4.8" fill="#ddd" text-anchor="middle">4000</text><text x="449.5" y="224" font-size="4.8" fill="#ddd" text-anchor="middle">4000</text><text x="494.75" y="224" font-size="4.8" fill="#ddd" text-anchor="middle">4000</text><text x="540.25" y="224" font-size="4.8" fill="#ddd" text-anchor="middle">4000</text><text x="595.0" y="224" font-size="4.8" fill="#ddd" text-anchor="middle">4000</text><text x="631.0" y="224" font-size="4.8" fill="#ddd" text-anchor="middle">4000</text><text x="300" y="235" font-size="4.8" fill="#ddd" text-anchor="middle">2700</text><text x="325" y="235" font-size="4.8" fill="#ddd" text-anchor="middle">1500</text><text x="350" y="235" font-size="4.8" fill="#ddd" text-anchor="middle">2700</text><text x="395" y="235" font-size="4.8" fill="#ddd" text-anchor="middle">2700</text><text x="420" y="235" font-size="4.8" fill="#ddd" text-anchor="middle">1500</text><text x="445" y="235" font-size="4.8" fill="#ddd" text-anchor="middle">2700</text><text x="490" y="235" font-size="4.8" fill="#ddd" text-anchor="middle">2700</text><text x="515" y="235" font-size="4.8" fill="#ddd" text-anchor="middle">1500</text><text x="540" y="235" font-size="4.8" fill="#ddd" text-anchor="middle">2700</text><text x="565" y="235" font-size="4.8" fill="#ddd" text-anchor="middle">650</text><text x="590" y="235" font-size="4.8" fill="#ddd" text-anchor="middle">1680</text><text x="626" y="235" font-size="4.8" fill="#ddd" text-anchor="middle">2400</text><line x1="300" y1="235" x2="300" y2="240" stroke="#00a400" stroke-width="1"/><line x1="340" y1="235" x2="340" y2="240" stroke="#00a400" stroke-width="1"/><line x1="362" y1="235" x2="362" y2="240" stroke="#00a400" stroke-width="1"/><line x1="392" y1="235" x2="392" y2="240" stroke="#00a400" stroke-width="1"/><line x1="430" y1="235" x2="430" y2="240" stroke="#00a400" stroke-width="1"/><line x1="454" y1="235" x2="454" y2="240" stroke="#00a400" stroke-width="1"/><line x1="485" y1="235" x2="485" y2="240" stroke="#00a400" stroke-width="1"/><line x1="498" y1="235" x2="498" y2="240" stroke="#00a400" stroke-width="1"/><line x1="520" y1="235" x2="520" y2="240" stroke="#00a400" stroke-width="1"/><line x1="560" y1="235" x2="560" y2="240" stroke="#00a400" stroke-width="1"/><circle cx="185" cy="291" r="4.9" stroke="#00a400" stroke-width="1" fill="none"/><text x="185" y="293.5" font-size="6.5" fill="#e8e8e8" text-anchor="middle">K</text><line x1="190" y1="291" x2="235" y2="291" stroke="#00a400" stroke-width="1"/><circle cx="185" cy="337.5" r="4.9" stroke="#00a400" stroke-width="1" fill="none"/><text x="185" y="340.0" font-size="6.5" fill="#e8e8e8" text-anchor="middle">J</text><line x1="190" y1="337.5" x2="235" y2="337.5" stroke="#00a400" stroke-width="1"/><circle cx="185" cy="384" r="4.9" stroke="#00a400" stroke-width="1" fill="none"/><text x="185" y="386.5" font-size="6.5" fill="#e8e8e8" text-anchor="middle">H</text><line x1="190" y1="384" x2="235" y2="384" stroke="#00a400" stroke-width="1"/><circle cx="185" cy="477.5" r="4.9" stroke="#00a400" stroke-width="1" fill="none"/><text x="185" y="480.0" font-size="6.5" fill="#e8e8e8" text-anchor="middle">G</text><line x1="190" y1="477.5" x2="235" y2="477.5" stroke="#00a400" stroke-width="1"/><circle cx="185" cy="528" r="4.9" stroke="#00a400" stroke-width="1" fill="none"/><text x="185" y="530.5" font-size="6.5" fill="#e8e8e8" text-anchor="middle">F</text><line x1="190" y1="528" x2="235" y2="528" stroke="#00a400" stroke-width="1"/><circle cx="185" cy="538.5" r="4.9" stroke="#00a400" stroke-width="1" fill="none"/><text x="185" y="541.0" font-size="6.5" fill="#e8e8e8" text-anchor="middle">E</text><line x1="190" y1="538.5" x2="235" y2="538.5" stroke="#00a400" stroke-width="1"/><circle cx="185" cy="567" r="4.9" stroke="#00a400" stroke-width="1" fill="none"/><text x="185" y="569.5" font-size="6.5" fill="#e8e8e8" text-anchor="middle">D</text><line x1="190" y1="567" x2="235" y2="567" stroke="#00a400" stroke-width="1"/><circle cx="185" cy="594.5" r="4.9" stroke="#00a400" stroke-width="1" fill="none"/><text x="185" y="597.0" font-size="6.5" fill="#e8e8e8" text-anchor="middle">C</text><line x1="190" y1="594.5" x2="235" y2="594.5" stroke="#00a400" stroke-width="1"/><circle cx="185" cy="624.5" r="4.9" stroke="#00a400" stroke-width="1" fill="none"/><text x="185" y="627.0" font-size="6.5" fill="#e8e8e8" text-anchor="middle">B</text><line x1="190" y1="624.5" x2="235" y2="624.5" stroke="#00a400" stroke-width="1"/><line x1="197.5" y1="291" x2="197.5" y2="631" stroke="#00a400" stroke-width="1"/><line x1="206.5" y1="291" x2="206.5" y2="631" stroke="#00a400" stroke-width="1"/><line x1="217.5" y1="384" x2="217.5" y2="631" stroke="#00a400" stroke-width="1"/><text x="206" y="314" font-size="5" fill="#e4e4e4" text-anchor="middle" transform="rotate(-90 206 314)">4000</text><text x="206" y="360" font-size="5" fill="#e4e4e4" text-anchor="middle" transform="rotate(-90 206 360)">4000</text><text x="206" y="430" font-size="5" fill="#e4e4e4" text-anchor="middle" transform="rotate(-90 206 430)">5000</text><text x="206" y="505" font-size="5" fill="#e4e4e4" text-anchor="middle" transform="rotate(-90 206 505)">27650</text><text x="206" y="515" font-size="5" fill="#e4e4e4" text-anchor="middle" transform="rotate(-90 206 515)">4300</text><text x="206" y="552" font-size="5" fill="#e4e4e4" text-anchor="middle" transform="rotate(-90 206 552)">2470</text><text x="206" y="580" font-size="5" fill="#e4e4e4" text-anchor="middle" transform="rotate(-90 206 580)">2130</text><text x="206" y="610" font-size="5" fill="#e4e4e4" text-anchor="middle" transform="rotate(-90 206 610)">3000</text><text x="215" y="396" font-size="5" fill="#e4e4e4" text-anchor="middle" transform="rotate(-90 215 396)">900</text><text x="215" y="408" font-size="5" fill="#e4e4e4" text-anchor="middle" transform="rotate(-90 215 408)">1250</text><text x="215" y="418" font-size="5" fill="#e4e4e4" text-anchor="middle" transform="rotate(-90 215 418)">900</text><text x="215" y="432" font-size="5" fill="#e4e4e4" text-anchor="middle" transform="rotate(-90 215 432)">3600</text><text x="215" y="458" font-size="5" fill="#e4e4e4" text-anchor="middle" transform="rotate(-90 215 458)">1800</text><text x="215" y="490" font-size="5" fill="#e4e4e4" text-anchor="middle" transform="rotate(-90 215 490)">2700</text><text x="215" y="520" font-size="5" fill="#e4e4e4" text-anchor="middle" transform="rotate(-90 215 520)">1800</text><text x="215" y="548" font-size="5" fill="#e4e4e4" text-anchor="middle" transform="rotate(-90 215 548)">3700</text><text x="215" y="580" font-size="5" fill="#e4e4e4" text-anchor="middle" transform="rotate(-90 215 580)">1500</text><line x1="214" y1="395" x2="220" y2="395" stroke="#00a400" stroke-width="1"/><line x1="214" y1="415" x2="220" y2="415" stroke="#00a400" stroke-width="1"/><line x1="214" y1="422" x2="220" y2="422" stroke="#00a400" stroke-width="1"/><line x1="214" y1="480" x2="220" y2="480" stroke="#00a400" stroke-width="1"/><line x1="214" y1="502" x2="220" y2="502" stroke="#00a400" stroke-width="1"/><line x1="214" y1="518" x2="220" y2="518" stroke="#00a400" stroke-width="1"/><line x1="214" y1="535" x2="220" y2="535" stroke="#00a400" stroke-width="1"/><line x1="214" y1="556" x2="220" y2="556" stroke="#00a400" stroke-width="1"/><line x1="214" y1="572" x2="220" y2="572" stroke="#00a400" stroke-width="1"/><line x1="214" y1="588" x2="220" y2="588" stroke="#00a400" stroke-width="1"/><circle cx="737.5" cy="291" r="4.9" stroke="#00a400" stroke-width="1" fill="none"/><text x="737.5" y="293.5" font-size="6.5" fill="#e8e8e8" text-anchor="middle">K</text><line x1="687" y1="291" x2="733" y2="291" stroke="#00a400" stroke-width="1"/><circle cx="737.5" cy="337.5" r="4.9" stroke="#00a400" stroke-width="1" fill="none"/><text x="737.5" y="340.0" font-size="6.5" fill="#e8e8e8" text-anchor="middle">J</text><line x1="687" y1="337.5" x2="733" y2="337.5" stroke="#00a400" stroke-width="1"/><circle cx="737.5" cy="384" r="4.9" stroke="#00a400" stroke-width="1" fill="none"/><text x="737.5" y="386.5" font-size="6.5" fill="#e8e8e8" text-anchor="middle">H</text><line x1="687" y1="384" x2="733" y2="384" stroke="#00a400" stroke-width="1"/><circle cx="737.5" cy="477.5" r="4.9" stroke="#00a400" stroke-width="1" fill="none"/><text x="737.5" y="480.0" font-size="6.5" fill="#e8e8e8" text-anchor="middle">G</text><line x1="687" y1="477.5" x2="733" y2="477.5" stroke="#00a400" stroke-width="1"/><circle cx="737.5" cy="528" r="4.9" stroke="#00a400" stroke-width="1" fill="none"/><text x="737.5" y="530.5" font-size="6.5" fill="#e8e8e8" text-anchor="middle">F</text><line x1="687" y1="528" x2="733" y2="528" stroke="#00a400" stroke-width="1"/><circle cx="737.5" cy="567" r="4.9" stroke="#00a400" stroke-width="1" fill="none"/><text x="737.5" y="569.5" font-size="6.5" fill="#e8e8e8" text-anchor="middle">D</text><line x1="687" y1="567" x2="733" y2="567" stroke="#00a400" stroke-width="1"/><circle cx="737.5" cy="594.5" r="4.9" stroke="#00a400" stroke-width="1" fill="none"/><text x="737.5" y="597.0" font-size="6.5" fill="#e8e8e8" text-anchor="middle">C</text><line x1="687" y1="594.5" x2="733" y2="594.5" stroke="#00a400" stroke-width="1"/><circle cx="737.5" cy="624.5" r="4.9" stroke="#00a400" stroke-width="1" fill="none"/><text x="737.5" y="627.0" font-size="6.5" fill="#e8e8e8" text-anchor="middle">B</text><line x1="687" y1="624.5" x2="733" y2="624.5" stroke="#00a400" stroke-width="1"/><line x1="705.8" y1="291" x2="705.8" y2="631" stroke="#00a400" stroke-width="1"/><line x1="715.5" y1="291" x2="715.5" y2="631" stroke="#00a400" stroke-width="1"/><line x1="725" y1="291" x2="725" y2="631" stroke="#00a400" stroke-width="1"/><text x="703" y="300" font-size="5" fill="#e4e4e4" text-anchor="middle" transform="rotate(-90 703 300)">800</text><text x="703" y="318" font-size="5" fill="#e4e4e4" text-anchor="middle" transform="rotate(-90 703 318)">2400</text><text x="703" y="334" font-size="5" fill="#e4e4e4" text-anchor="middle" transform="rotate(-90 703 334)">800</text><text x="703" y="343" font-size="5" fill="#e4e4e4" text-anchor="middle" transform="rotate(-90 703 343)">1000</text><text x="703" y="360" font-size="5" fill="#e4e4e4" text-anchor="middle" transform="rotate(-90 703 360)">2400</text><text x="703" y="382" font-size="5" fill="#e4e4e4" text-anchor="middle" transform="rotate(-90 703 382)">800</text><text x="703" y="398" font-size="5" fill="#e4e4e4" text-anchor="middle" transform="rotate(-90 703 398)">1467</text><text x="703" y="412" font-size="5" fill="#e4e4e4" text-anchor="middle" transform="rotate(-90 703 412)">1000</text><text x="703" y="432" font-size="5" fill="#e4e4e4" text-anchor="middle" transform="rotate(-90 703 432)">1467</text><text x="703" y="462" font-size="5" fill="#e4e4e4" text-anchor="middle" transform="rotate(-90 703 462)">1000</text><text x="703" y="505" font-size="5" fill="#e4e4e4" text-anchor="middle" transform="rotate(-90 703 505)">3007</text><text x="703" y="530" font-size="5" fill="#e4e4e4" text-anchor="middle" transform="rotate(-90 703 530)">2000</text><text x="703" y="556" font-size="5" fill="#e4e4e4" text-anchor="middle" transform="rotate(-90 703 556)">2370</text><text x="703" y="600" font-size="5" fill="#e4e4e4" text-anchor="middle" transform="rotate(-90 703 600)">3000</text><text x="714" y="314" font-size="5" fill="#e4e4e4" text-anchor="middle" transform="rotate(-90 714 314)">4000</text><text x="714" y="360" font-size="5" fill="#e4e4e4" text-anchor="middle" transform="rotate(-90 714 360)">4000</text><text x="714" y="430" font-size="5" fill="#e4e4e4" text-anchor="middle" transform="rotate(-90 714 430)">8000</text><text x="714" y="520" font-size="5" fill="#e4e4e4" text-anchor="middle" transform="rotate(-90 714 520)">4300</text><text x="714" y="555" font-size="5" fill="#e4e4e4" text-anchor="middle" transform="rotate(-90 714 555)">2370</text><text x="724" y="505" font-size="5" fill="#e4e4e4" text-anchor="middle" transform="rotate(-90 724 505)">27650</text><line x1="702" y1="300" x2="708" y2="300" stroke="#00a400" stroke-width="1"/><line x1="702" y1="330" x2="708" y2="330" stroke="#00a400" stroke-width="1"/><line x1="702" y1="348" x2="708" y2="348" stroke="#00a400" stroke-width="1"/><line x1="702" y1="388" x2="708" y2="388" stroke="#00a400" stroke-width="1"/><line x1="702" y1="415" x2="708" y2="415" stroke="#00a400" stroke-width="1"/><line x1="702" y1="432" x2="708" y2="432" stroke="#00a400" stroke-width="1"/><line x1="702" y1="450" x2="708" y2="450" stroke="#00a400" stroke-width="1"/><line x1="702" y1="470" x2="708" y2="470" stroke="#00a400" stroke-width="1"/><line x1="702" y1="500" x2="708" y2="500" stroke="#00a400" stroke-width="1"/><line x1="702" y1="510" x2="708" y2="510" stroke="#00a400" stroke-width="1"/><line x1="702" y1="540" x2="708" y2="540" stroke="#00a400" stroke-width="1"/><line x1="702" y1="560" x2="708" y2="560" stroke="#00a400" stroke-width="1"/><line x1="702" y1="585" x2="708" y2="585" stroke="#00a400" stroke-width="1"/><line x1="382" y1="289.5" x2="653.5" y2="289.5" stroke="#bdbdbd" stroke-width="1"/><line x1="382" y1="292.5" x2="653.5" y2="292.5" stroke="#bdbdbd" stroke-width="1"/><line x1="652.0" y1="291" x2="652.0" y2="631" stroke="#bdbdbd" stroke-width="1"/><line x1="655.0" y1="291" x2="655.0" y2="631" stroke="#bdbdbd" stroke-width="1"/><line x1="472" y1="382.5" x2="653.5" y2="382.5" stroke="#bdbdbd" stroke-width="1"/><line x1="472" y1="385.5" x2="653.5" y2="385.5" stroke="#bdbdbd" stroke-width="1"/><line x1="580.5" y1="293" x2="580.5" y2="357" stroke="#bdbdbd" stroke-width="1"/><line x1="582.5" y1="293" x2="582.5" y2="357" stroke="#bdbdbd" stroke-width="1"/><line x1="606.5" y1="293" x2="606.5" y2="384" stroke="#bdbdbd" stroke-width="1"/><line x1="608.5" y1="293" x2="608.5" y2="384" stroke="#bdbdbd" stroke-width="1"/><line x1="607.5" y1="336.5" x2="653.5" y2="336.5" stroke="#bdbdbd" stroke-width="1"/><line x1="607.5" y1="338.5" x2="653.5" y2="338.5" stroke="#bdbdbd" stroke-width="1"/><line x1="335.0" y1="384" x2="335.0" y2="567" stroke="#bdbdbd" stroke-width="1"/><line x1="338.0" y1="384" x2="338.0" y2="567" stroke="#bdbdbd" stroke-width="1"/><line x1="291" y1="565.5" x2="336.5" y2="565.5" stroke="#bdbdbd" stroke-width="1"/><line x1="291" y1="568.5" x2="336.5" y2="568.5" stroke="#bdbdbd" stroke-width="1"/><line x1="289.5" y1="567" x2="289.5" y2="631" stroke="#bdbdbd" stroke-width="1"/><line x1="292.5" y1="567" x2="292.5" y2="631" stroke="#bdbdbd" stroke-width="1"/><line x1="382" y1="476.0" x2="472" y2="476.0" stroke="#bdbdbd" stroke-width="1"/><line x1="382" y1="479.0" x2="472" y2="479.0" stroke="#bdbdbd" stroke-width="1"/><line x1="470.5" y1="477.5" x2="470.5" y2="567.5" stroke="#bdbdbd" stroke-width="1"/><line x1="473.5" y1="477.5" x2="473.5" y2="567.5" stroke="#bdbdbd" stroke-width="1"/><line x1="436.5" y1="477.5" x2="436.5" y2="567.5" stroke="#bdbdbd" stroke-width="1"/><line x1="438.5" y1="477.5" x2="438.5" y2="567.5" stroke="#bdbdbd" stroke-width="1"/><line x1="437.5" y1="527" x2="472" y2="527" stroke="#bdbdbd" stroke-width="1"/><line x1="437.5" y1="529" x2="472" y2="529" stroke="#bdbdbd" stroke-width="1"/><line x1="382" y1="537" x2="437.5" y2="537" stroke="#bdbdbd" stroke-width="1"/><line x1="382" y1="539" x2="437.5" y2="539" stroke="#bdbdbd" stroke-width="1"/><line x1="381" y1="538" x2="381" y2="567.5" stroke="#bdbdbd" stroke-width="1"/><line x1="383" y1="538" x2="383" y2="567.5" stroke="#bdbdbd" stroke-width="1"/><line x1="409" y1="538" x2="409" y2="567.5" stroke="#bdbdbd" stroke-width="1"/><line x1="411" y1="538" x2="411" y2="567.5" stroke="#bdbdbd" stroke-width="1"/><line x1="382" y1="566.0" x2="472" y2="566.0" stroke="#bdbdbd" stroke-width="1"/><line x1="382" y1="569.0" x2="472" y2="569.0" stroke="#bdbdbd" stroke-width="1"/><line x1="561" y1="527" x2="653.5" y2="527" stroke="#bdbdbd" stroke-width="1"/><line x1="561" y1="529" x2="653.5" y2="529" stroke="#bdbdbd" stroke-width="1"/><line x1="560" y1="528" x2="560" y2="567.5" stroke="#bdbdbd" stroke-width="1"/><line x1="562" y1="528" x2="562" y2="567.5" stroke="#bdbdbd" stroke-width="1"/><line x1="561" y1="566.0" x2="653.5" y2="566.0" stroke="#bdbdbd" stroke-width="1"/><line x1="561" y1="569.0" x2="653.5" y2="569.0" stroke="#bdbdbd" stroke-width="1"/><line x1="291" y1="592.5" x2="653.5" y2="592.5" stroke="#bdbdbd" stroke-width="1"/><line x1="291" y1="594.5" x2="653.5" y2="594.5" stroke="#bdbdbd" stroke-width="1"/><path d="M307 596 H335 V626 H307Z" stroke="#bdbdbd" stroke-width="1" fill="none"/><path d="M337 596 H365 V626 H337Z" stroke="#bdbdbd" stroke-width="1" fill="none"/><path d="M398 596 H426 V626 H398Z" stroke="#bdbdbd" stroke-width="1" fill="none"/><path d="M428 596 H456 V626 H428Z" stroke="#bdbdbd" stroke-width="1" fill="none"/><path d="M488 596 H516 V626 H488Z" stroke="#bdbdbd" stroke-width="1" fill="none"/><path d="M518 596 H546 V626 H518Z" stroke="#bdbdbd" stroke-width="1" fill="none"/><path d="M578.5 596 H606.5 V626 H578.5Z" stroke="#bdbdbd" stroke-width="1" fill="none"/><path d="M608.5 596 H636.5 V626 H608.5Z" stroke="#bdbdbd" stroke-width="1" fill="none"/><rect x="379.0" y="288.0" width="6" height="6" fill="#9a9a9a"/><rect x="469.0" y="288.0" width="6" height="6" fill="#9a9a9a"/><rect x="560.0" y="288.0" width="6" height="6" fill="#9a9a9a"/><rect x="650.5" y="288.0" width="6" height="6" fill="#9a9a9a"/><rect x="650.5" y="334.5" width="6" height="6" fill="#9a9a9a"/><rect x="560.0" y="381.0" width="6" height="6" fill="#9a9a9a"/><rect x="650.5" y="381.0" width="6" height="6" fill="#9a9a9a"/><rect x="469.0" y="381.0" width="6" height="6" fill="#9a9a9a"/><rect x="379.0" y="381.0" width="6" height="6" fill="#9a9a9a"/><rect x="333.5" y="381.0" width="6" height="6" fill="#9a9a9a"/><rect x="333.5" y="474.5" width="6" height="6" fill="#9a9a9a"/><rect x="379.0" y="474.5" width="6" height="6" fill="#9a9a9a"/><rect x="469.0" y="474.5" width="6" height="6" fill="#9a9a9a"/><rect x="560.0" y="474.5" width="6" height="6" fill="#9a9a9a"/><rect x="650.5" y="474.5" width="6" height="6" fill="#9a9a9a"/><rect x="288.0" y="564.0" width="6" height="6" fill="#9a9a9a"/><rect x="333.5" y="564.0" width="6" height="6" fill="#9a9a9a"/><rect x="379.0" y="564.5" width="6" height="6" fill="#9a9a9a"/><rect x="469.0" y="564.5" width="6" height="6" fill="#9a9a9a"/><rect x="560.0" y="564.5" width="6" height="6" fill="#9a9a9a"/><rect x="650.5" y="564.5" width="6" height="6" fill="#9a9a9a"/><rect x="288.0" y="621.5" width="6" height="6" fill="#9a9a9a"/><rect x="333.5" y="621.5" width="6" height="6" fill="#9a9a9a"/><rect x="379.0" y="621.5" width="6" height="6" fill="#9a9a9a"/><rect x="424.0" y="621.5" width="6" height="6" fill="#9a9a9a"/><rect x="469.0" y="621.5" width="6" height="6" fill="#9a9a9a"/><rect x="514.5" y="621.5" width="6" height="6" fill="#9a9a9a"/><rect x="560.0" y="621.5" width="6" height="6" fill="#9a9a9a"/><rect x="605.5" y="621.5" width="6" height="6" fill="#9a9a9a"/><rect x="650.5" y="621.5" width="6" height="6" fill="#9a9a9a"/><path d="M478.75 289.5 H510 V292.5 H478.75Z M478.75 291 H510" stroke="#00c4c4" stroke-width="0.8" fill="none"/><path d="M523.75 289.5 H555 V292.5 H523.75Z M523.75 291 H555" stroke="#00c4c4" stroke-width="0.8" fill="none"/><path d="M395 289.5 H425 V292.5 H395Z M395 291 H425" stroke="#00c4c4" stroke-width="0.8" fill="none"/><path d="M432 289.5 H465 V292.5 H432Z M432 291 H465" stroke="#00c4c4" stroke-width="0.8" fill="none"/><path d="M652 298 V329 H655 V298Z" stroke="#00c4c4" stroke-width="0.8" fill="none"/><path d="M652 346 V375 H655 V346Z" stroke="#00c4c4" stroke-width="0.8" fill="none"/><path d="M652 400 V422 H655 V400Z" stroke="#00c4c4" stroke-width="0.8" fill="none"/><path d="M652 442 V462 H655 V442Z" stroke="#00c4c4" stroke-width="0.8" fill="none"/><path d="M335 485 V515 H338 V485Z M335 521 V560 H338 V521Z" stroke="#00c4c4" stroke-width="0.8" fill="none"/><path d="M300 565.5 H334 V568.5 H300Z" stroke="#00c4c4" stroke-width="0.8" fill="none"/><path d="M290 572 V590 H293 V572Z" stroke="#00c4c4" stroke-width="0.8" fill="none"/><path d="M381 540 V557 H384 V540Z" stroke="#00c4c4" stroke-width="0.8" fill="none"/><path d="M295 596 V604 A8 8 0 0 0 303 596" stroke="#00c4c4" stroke-width="1" fill="none"/><path d="M378 596 V604 A8 8 0 0 1 370 596" stroke="#00c4c4" stroke-width="1" fill="none"/><path d="M321 609 A8 8 0 0 0 313 617 M321 609 H315 M351 609 A8 8 0 0 1 359 617 M351 609 H357" stroke="#00c4c4" stroke-width="1" fill="none"/><path d="M386 596 V604 A8 8 0 0 0 394 596" stroke="#00c4c4" stroke-width="1" fill="none"/><path d="M469 596 V604 A8 8 0 0 1 461 596" stroke="#00c4c4" stroke-width="1" fill="none"/><path d="M412 609 A8 8 0 0 0 404 617 M412 609 H406 M442 609 A8 8 0 0 1 450 617 M442 609 H448" stroke="#00c4c4" stroke-width="1" fill="none"/><path d="M476 596 V604 A8 8 0 0 0 484 596" stroke="#00c4c4" stroke-width="1" fill="none"/><path d="M559 596 V604 A8 8 0 0 1 551 596" stroke="#00c4c4" stroke-width="1" fill="none"/><path d="M502 609 A8 8 0 0 0 494 617 M502 609 H496 M532 609 A8 8 0 0 1 540 617 M532 609 H538" stroke="#00c4c4" stroke-width="1" fill="none"/><path d="M566.5 596 V604 A8 8 0 0 0 574.5 596" stroke="#00c4c4" stroke-width="1" fill="none"/><path d="M649.5 596 V604 A8 8 0 0 1 641.5 596" stroke="#00c4c4" stroke-width="1" fill="none"/><path d="M592.5 609 A8 8 0 0 0 584.5 617 M592.5 609 H586.5 M622.5 609 A8 8 0 0 1 630.5 617 M622.5 609 H628.5" stroke="#00c4c4" stroke-width="1" fill="none"/><path d="M609 295 C619 295 619 305 609 308" stroke="#00c4c4" stroke-width="1.1" fill="none"/><path d="M609 370 C619 372 619 380 609 382" stroke="#00c4c4" stroke-width="1.1" fill="none"/><path d="M470 568 A8 8 0 0 0 462 560 V568 M424 568 A8 8 0 0 0 416 560 V568 M470 521 A8 8 0 0 0 462 513 V521" stroke="#00c4c4" stroke-width="1" fill="none"/><path d="M532 378 Q535 370 540 383 Q545 370 548 378" stroke="#00c4c4" stroke-width="1" fill="none"/><path d="M655 506 C662 504 664 514 657 516 C664 518 662 526 655 524 M655 573 C662 571 664 581 657 583 C664 585 662 593 655 591" stroke="#00c4c4" stroke-width="1" fill="none"/><path d="M565 572 Q568 582 573 572 Q578 582 582 572" stroke="#00c4c4" stroke-width="1" fill="none"/><path d="M334.0 375 A46.0 38.0 0 0 1 380 337.0" stroke="#00c4c4" stroke-width="0.9" fill="none"/><path d="M336.2 375 A43.8 35.8 0 0 1 380 339.2" stroke="#00c4c4" stroke-width="0.9" fill="none"/><path d="M338.4 375 A41.6 33.6 0 0 1 380 341.4" stroke="#00c4c4" stroke-width="0.9" fill="none"/><path d="M340.6 375 A39.4 31.4 0 0 1 380 343.6" stroke="#00c4c4" stroke-width="0.9" fill="none"/><path d="M326 392 A9 9 0 0 0 336 405 M325 392 H334" stroke="#00c4c4" stroke-width="1" fill="none"/><path d="M326 466 A9 9 0 0 1 336 453 M325 468 H334" stroke="#00c4c4" stroke-width="1" fill="none"/><path d="M319 417 A22 22 0 0 1 354 417 M319 446 A22 22 0 0 0 354 446 M324 414 L349 449 M349 414 L324 449" stroke="#00c4c4" stroke-width="1" fill="none"/><path d="M333 405 h6 v5 h-6z M333 449 h6 v5 h-6z" stroke="#bdbdbd" stroke-width="0.8" fill="none"/><path d="M265.5 311 H335 V375 M265.5 311 V515.5 H334" stroke="#c8c000" stroke-width="1" fill="none"/><path d="M334 375.5 H246.2 V487 H334 M334 378.5 H249.2 V484 H334" stroke="#b000b0" stroke-width="1" fill="none"/><path d="M334 377 H252.2 V485.5 H334" stroke="#c8c000" stroke-width="0.9" fill="none"/><path d="M334 380.7 H256 V481.8 H334" stroke="#c8c000" stroke-width="0.9" fill="none"/><path d="M334 384 H259.6 V478.5 H334" stroke="#c8c000" stroke-width="0.9" fill="none"/><path d="M334 387 H263 V475.5 H334" stroke="#c8c000" stroke-width="0.9" fill="none"/><circle cx="270" cy="384" r="3" fill="#9a9a9a"/><circle cx="270" cy="477" r="3" fill="#9a9a9a"/><path d="M656.5 442.3 H673 V478 H656.5" stroke="#c8c000" stroke-width="1" fill="none"/><path d="M673 478 V505.6 A8.85 8.85 0 0 1 673 523.3 V571.7 A9.45 9.45 0 0 1 673 590.6 V593 H656.5" stroke="#00a400" stroke-width="1.3" fill="none"/><line x1="387" y1="494" x2="387" y2="522.0" stroke="#c8c000" stroke-width="0.9"/><line x1="390" y1="494" x2="390" y2="518.5" stroke="#c8c000" stroke-width="0.9"/><line x1="393" y1="494" x2="393" y2="515.0" stroke="#c8c000" stroke-width="0.9"/><line x1="396" y1="494" x2="396" y2="511.5" stroke="#c8c000" stroke-width="0.9"/><line x1="399" y1="494" x2="399" y2="508.0" stroke="#c8c000" stroke-width="0.9"/><line x1="402" y1="494" x2="402" y2="504.5" stroke="#c8c000" stroke-width="0.9"/><line x1="405" y1="494" x2="405" y2="501.0" stroke="#c8c000" stroke-width="0.9"/><path d="M386 494 H410 L397 522 H386Z" stroke="#c8c000" stroke-width="1" fill="none"/><line x1="380" y1="509" x2="402" y2="509" stroke="#00a400" stroke-width="0.8"/><line x1="593.0" y1="529" x2="593.0" y2="548.0" stroke="#c8c000" stroke-width="0.9"/><line x1="595.8" y1="529" x2="595.8" y2="545.5" stroke="#c8c000" stroke-width="0.9"/><line x1="598.6" y1="529" x2="598.6" y2="543.0" stroke="#c8c000" stroke-width="0.9"/><line x1="601.4" y1="529" x2="601.4" y2="540.5" stroke="#c8c000" stroke-width="0.9"/><line x1="604.2" y1="529" x2="604.2" y2="538.0" stroke="#c8c000" stroke-width="0.9"/><line x1="607.0" y1="529" x2="607.0" y2="535.5" stroke="#c8c000" stroke-width="0.9"/><path d="M592 529 H612 L604 549 H592Z" stroke="#c8c000" stroke-width="1" fill="none"/><path d="M388 542 h17 v20 h-17z M388 542 L405 562 M405 542 L388 562 M391 538 h11 v3 h-11z" stroke="#c8c000" stroke-width="0.9" fill="none"/><text x="520" y="312" font-size="12.5" fill="#d0d0d0" text-anchor="middle" font-family="Liberation Serif">休息厅</text><text x="630" y="313" font-size="5" fill="#ddd" text-anchor="middle">卫生间</text><text x="630" y="319" font-size="4.5" fill="#ddd" text-anchor="middle">13.65</text><text x="630" y="359" font-size="5" fill="#ddd" text-anchor="middle">卫生间</text><text x="630" y="365" font-size="4.5" fill="#ddd" text-anchor="middle">13.65</text><text x="578" y="548" font-size="4" fill="#ddd" text-anchor="middle">楼梯间</text><text x="578" y="553" font-size="4" fill="#ddd" text-anchor="middle">25.12</text><text x="420" y="550" font-size="4" fill="#ddd" text-anchor="middle">配电间</text><text x="420" y="556" font-size="4" fill="#ddd" text-anchor="middle">5.21</text><text x="321" y="604" font-size="4.5" fill="#ddd" text-anchor="middle">卫生间</text><text x="321" y="610" font-size="4.5" fill="#ddd" text-anchor="middle">5.48</text><text x="351" y="604" font-size="4.5" fill="#ddd" text-anchor="middle">卫生间</text><text x="351" y="610" font-size="4.5" fill="#ddd" text-anchor="middle">5.48</text><text x="412" y="604" font-size="4.5" fill="#ddd" text-anchor="middle">卫生间</text><text x="412" y="610" font-size="4.5" fill="#ddd" text-anchor="middle">5.48</text><text x="442" y="604" font-size="4.5" fill="#ddd" text-anchor="middle">卫生间</text><text x="442" y="610" font-size="4.5" fill="#ddd" text-anchor="middle">5.48</text><text x="502" y="604" font-size="4.5" fill="#ddd" text-anchor="middle">卫生间</text><text x="502" y="610" font-size="4.5" fill="#ddd" text-anchor="middle">5.48</text><text x="532" y="604" font-size="4.5" fill="#ddd" text-anchor="middle">卫生间</text><text x="532" y="610" font-size="4.5" fill="#ddd" text-anchor="middle">5.48</text><text x="592.5" y="604" font-size="4.5" fill="#ddd" text-anchor="middle">卫生间</text><text x="592.5" y="610" font-size="4.5" fill="#ddd" text-anchor="middle">5.48</text><text x="622.5" y="604" font-size="4.5" fill="#ddd" text-anchor="middle">卫生间</text><text x="622.5" y="610" font-size="4.5" fill="#ddd" text-anchor="middle">5.48</text><text x="276" y="412" font-size="4" fill="#ddd" text-anchor="middle">±0.00</text><text x="246" y="412" font-size="4" fill="#ddd" text-anchor="middle">-0.60</text><text x="583" y="442" font-size="4" fill="#ddd" text-anchor="middle">±0.00</text><text x="675" y="440" font-size="4" fill="#ddd" text-anchor="middle">-0.60</text><text x="668" y="550" font-size="4" fill="#ddd" text-anchor="middle">±0.00</text><path d="M575 444 l3 4 l3 -4z M590 444 h-15" stroke="#00a400" stroke-width="0.7" fill="none"/><path d="M232 414 l3 4 l3 -4z M250 414 h-18" stroke="#00a400" stroke-width="0.7" fill="none"/><path d="M268 414 l3 4 l3 -4z M285 414 h-17" stroke="#00a400" stroke-width="0.7" fill="none"/><text x="384" y="441" font-size="3.5" fill="#00c4c4" text-anchor="middle">C4</text><text x="325" y="420" font-size="3.5" fill="#00c4c4" text-anchor="middle">C5</text><text x="660" y="395" font-size="3.5" fill="#00c4c4" text-anchor="middle">C3</text><text x="660" y="440" font-size="3.5" fill="#00c4c4" text-anchor="middle">C1</text><text x="430" y="305" font-size="3.5" fill="#00c4c4" text-anchor="middle">C3</text><text x="485" y="300" font-size="3.5" fill="#00c4c4" text-anchor="middle">C3</text><path d="M392.3 240.7 H475 V329.4 H392.3Z M397.2 246.5 H466 V323.6 H397.2Z" stroke="#e8e8e8" stroke-width="1" fill="none"/><path d="M382 376.5 H472 M382 383.5 H472 M382 421 H400 M382 427.5 H400" stroke="#d8d8d8" stroke-width="1.2" fill="none"/><path d="M395 380 V428" stroke="#d8d000" stroke-width="1" fill="none"/><path d="M383 392 H400 M383 412 H400" stroke="#00a800" stroke-width="1" fill="none"/><path d="M460 384 V396 M461 421 L470 432" stroke="#bdbdbd" stroke-width="1" fill="none"/><line x1="470.5" y1="384" x2="470.5" y2="477.5" stroke="#bdbdbd" stroke-width="1"/><line x1="473.5" y1="384" x2="473.5" y2="477.5" stroke="#bdbdbd" stroke-width="1"/><path d="M772 424 H999.5 V554.4 H772Z" stroke="#f0f0f0" stroke-width="1.2" fill="none"/><line x1="788.5" y1="424" x2="788.5" y2="554.4" stroke="#f0f0f0" stroke-width="1"/><line x1="814.5" y1="424" x2="814.5" y2="554.4" stroke="#f0f0f0" stroke-width="1"/><line x1="831" y1="424" x2="831" y2="554.4" stroke="#f0f0f0" stroke-width="1"/><line x1="844" y1="424" x2="844" y2="554.4" stroke="#f0f0f0" stroke-width="1"/><line x1="855.5" y1="424" x2="855.5" y2="554.4" stroke="#f0f0f0" stroke-width="1"/><line x1="902.5" y1="424" x2="902.5" y2="554.4" stroke="#f0f0f0" stroke-width="1"/><line x1="915.5" y1="424" x2="915.5" y2="554.4" stroke="#f0f0f0" stroke-width="1"/><line x1="941.5" y1="424" x2="941.5" y2="554.4" stroke="#f0f0f0" stroke-width="1"/><line x1="772" y1="440" x2="999.5" y2="440" stroke="#f0f0f0" stroke-width="1.2"/><line x1="814.5" y1="432" x2="844" y2="432" stroke="#f0f0f0" stroke-width="0.8"/><line x1="788.5" y1="448.1714285714286" x2="999.5" y2="448.1714285714286" stroke="#f0f0f0" stroke-width="0.9"/><line x1="788.5" y1="456.34285714285716" x2="999.5" y2="456.34285714285716" stroke="#f0f0f0" stroke-width="0.9"/><line x1="788.5" y1="464.51428571428573" x2="999.5" y2="464.51428571428573" stroke="#f0f0f0" stroke-width="0.9"/><line x1="788.5" y1="472.68571428571425" x2="999.5" y2="472.68571428571425" stroke="#f0f0f0" stroke-width="0.9"/><line x1="772" y1="480.85714285714283" x2="999.5" y2="480.85714285714283" stroke="#f0f0f0" stroke-width="0.9"/><line x1="772" y1="489.0285714285714" x2="999.5" y2="489.0285714285714" stroke="#f0f0f0" stroke-width="0.9"/><line x1="772" y1="497.2" x2="999.5" y2="497.2" stroke="#f0f0f0" stroke-width="0.9"/><line x1="788.5" y1="505.37142857142857" x2="999.5" y2="505.37142857142857" stroke="#f0f0f0" stroke-width="0.9"/><line x1="788.5" y1="513.5428571428571" x2="999.5" y2="513.5428571428571" stroke="#f0f0f0" stroke-width="0.9"/><line x1="788.5" y1="521.7142857142857" x2="999.5" y2="521.7142857142857" stroke="#f0f0f0" stroke-width="0.9"/><line x1="788.5" y1="529.8857142857142" x2="999.5" y2="529.8857142857142" stroke="#f0f0f0" stroke-width="0.9"/><line x1="788.5" y1="538.0571428571428" x2="999.5" y2="538.0571428571428" stroke="#f0f0f0" stroke-width="0.9"/><line x1="772" y1="546.2285714285714" x2="999.5" y2="546.2285714285714" stroke="#f0f0f0" stroke-width="0.9"/><text x="886" y="420" font-size="9" fill="#eee" text-anchor="middle">门窗表</text><text x="780" y="434" font-size="3.6" fill="#ddd" text-anchor="middle">类型</text><text x="801" y="434" font-size="3.6" fill="#ddd" text-anchor="middle">设计编号</text><text x="829" y="434" font-size="3.6" fill="#ddd" text-anchor="middle">洞口尺寸(mm)</text><text x="849.5" y="434" font-size="3.6" fill="#ddd" text-anchor="middle">数量</text><text x="879" y="434" font-size="3.6" fill="#ddd" text-anchor="middle">图集名称</text><text x="909" y="434" font-size="3.6" fill="#ddd" text-anchor="middle">页次</text><text x="928.5" y="434" font-size="3.6" fill="#ddd" text-anchor="middle">选用型号</text><text x="970" y="434" font-size="3.6" fill="#ddd" text-anchor="middle">备注</text><text x="801" y="446.0" font-size="4" fill="#ddd" text-anchor="middle"></text><text x="822.5" y="446.0" font-size="4" fill="#ddd" text-anchor="middle">1400</text><text x="837.5" y="446.0" font-size="4" fill="#ddd" text-anchor="middle">2100</text><text x="849.5" y="446.0" font-size="4" fill="#ddd" text-anchor="middle">1</text><text x="801" y="454.1714285714286" font-size="4" fill="#ddd" text-anchor="middle">C3</text><text x="822.5" y="454.1714285714286" font-size="4" fill="#ddd" text-anchor="middle">1800</text><text x="837.5" y="454.1714285714286" font-size="4" fill="#ddd" text-anchor="middle">1500</text><text x="849.5" y="454.1714285714286" font-size="4" fill="#ddd" text-anchor="middle">2</text><text x="801" y="462.34285714285716" font-size="4" fill="#ddd" text-anchor="middle">C4</text><text x="822.5" y="462.34285714285716" font-size="4" fill="#ddd" text-anchor="middle">2400</text><text x="837.5" y="462.34285714285716" font-size="4" fill="#ddd" text-anchor="middle">1800</text><text x="849.5" y="462.34285714285716" font-size="4" fill="#ddd" text-anchor="middle">2</text><text x="801" y="470.51428571428573" font-size="4" fill="#ddd" text-anchor="middle">C5</text><text x="822.5" y="470.51428571428573" font-size="4" fill="#ddd" text-anchor="middle">2700</text><text x="837.5" y="470.51428571428573" font-size="4" fill="#ddd" text-anchor="middle">1800</text><text x="849.5" y="470.51428571428573" font-size="4" fill="#ddd" text-anchor="middle">8</text><text x="801" y="478.68571428571425" font-size="4" fill="#ddd" text-anchor="middle">C6</text><text x="822.5" y="478.68571428571425" font-size="4" fill="#ddd" text-anchor="middle">1500</text><text x="837.5" y="478.68571428571425" font-size="4" fill="#ddd" text-anchor="middle">1500</text><text x="849.5" y="478.68571428571425" font-size="4" fill="#ddd" text-anchor="middle">1</text><text x="801" y="486.85714285714283" font-size="4" fill="#ddd" text-anchor="middle">MC5</text><text x="822.5" y="486.85714285714283" font-size="4" fill="#ddd" text-anchor="middle">2100</text><text x="837.5" y="486.85714285714283" font-size="4" fill="#ddd" text-anchor="middle">2100</text><text x="849.5" y="486.85714285714283" font-size="4" fill="#ddd" text-anchor="middle">1</text><text x="801" y="495.0285714285714" font-size="4" fill="#ddd" text-anchor="middle">C2</text><text x="822.5" y="495.0285714285714" font-size="4" fill="#ddd" text-anchor="middle">8390</text><text x="837.5" y="495.0285714285714" font-size="4" fill="#ddd" text-anchor="middle">1800</text><text x="849.5" y="495.0285714285714" font-size="4" fill="#ddd" text-anchor="middle">1</text><text x="801" y="503.2" font-size="4" fill="#ddd" text-anchor="middle">M1</text><text x="822.5" y="503.2" font-size="4" fill="#ddd" text-anchor="middle">900</text><text x="837.5" y="503.2" font-size="4" fill="#ddd" text-anchor="middle">2100</text><text x="849.5" y="503.2" font-size="4" fill="#ddd" text-anchor="middle">10</text><text x="801" y="511.37142857142857" font-size="4" fill="#ddd" text-anchor="middle">M2</text><text x="822.5" y="511.37142857142857" font-size="4" fill="#ddd" text-anchor="middle">800</text><text x="837.5" y="511.37142857142857" font-size="4" fill="#ddd" text-anchor="middle">2000</text><text x="849.5" y="511.37142857142857" font-size="4" fill="#ddd" text-anchor="middle">8</text><text x="801" y="519.5428571428571" font-size="4" fill="#ddd" text-anchor="middle">M3</text><text x="822.5" y="519.5428571428571" font-size="4" fill="#ddd" text-anchor="middle">900</text><text x="837.5" y="519.5428571428571" font-size="4" fill="#ddd" text-anchor="middle">2100</text><text x="849.5" y="519.5428571428571" font-size="4" fill="#ddd" text-anchor="middle">3</text><text x="801" y="527.7142857142857" font-size="4" fill="#ddd" text-anchor="middle">M4</text><text x="822.5" y="527.7142857142857" font-size="4" fill="#ddd" text-anchor="middle">1500</text><text x="837.5" y="527.7142857142857" font-size="4" fill="#ddd" text-anchor="middle">2100</text><text x="849.5" y="527.7142857142857" font-size="4" fill="#ddd" text-anchor="middle">5</text><text x="801" y="535.8857142857142" font-size="4" fill="#ddd" text-anchor="middle">M6</text><text x="822.5" y="535.8857142857142" font-size="4" fill="#ddd" text-anchor="middle">1200</text><text x="837.5" y="535.8857142857142" font-size="4" fill="#ddd" text-anchor="middle">2700</text><text x="849.5" y="535.8857142857142" font-size="4" fill="#ddd" text-anchor="middle">2</text><text x="801" y="544.0571428571428" font-size="4" fill="#ddd" text-anchor="middle">JM7</text><text x="822.5" y="544.0571428571428" font-size="4" fill="#ddd" text-anchor="middle">3080</text><text x="837.5" y="544.0571428571428" font-size="4" fill="#ddd" text-anchor="middle">2700</text><text x="849.5" y="544.0571428571428" font-size="4" fill="#ddd" text-anchor="middle">1</text><text x="801" y="552.2285714285714" font-size="4" fill="#ddd" text-anchor="middle">C1</text><text x="822.5" y="552.2285714285714" font-size="4" fill="#ddd" text-anchor="middle">2440</text><text x="837.5" y="552.2285714285714" font-size="4" fill="#ddd" text-anchor="middle">1800</text><text x="849.5" y="552.2285714285714" font-size="4" fill="#ddd" text-anchor="middle">8</text><text x="780" y="463" font-size="4" fill="#ddd" text-anchor="middle">窗</text><text x="780" y="487" font-size="4" fill="#ddd" text-anchor="middle">门窗</text><text x="780" y="495" font-size="4" fill="#ddd" text-anchor="middle">幕墙</text><text x="780" y="525" font-size="4" fill="#ddd" text-anchor="middle">门</text><text x="780" y="552" font-size="4" fill="#ddd" text-anchor="middle">幕墙</text></g></svg><div class="a" style="left:0;top:151px;width:28px;height:480px;background:#f3f3f3;border-left:1px solid #8fb0dc"></div>
<div class="a" style="left:0;top:151px;width:28px;height:6px;background:#3467ad"></div>
<svg width="1280" height="720">
<g fill="#f7f7f7" stroke="#e4e4e4" stroke-width="1">
<rect x="6" y="165" width="15" height="15" rx="2"/>
<rect x="6" y="199" width="15" height="15" rx="2"/>
<rect x="6" y="233" width="15" height="15" rx="2"/>
<rect x="6" y="267" width="15" height="15" rx="2"/>
<rect x="6" y="301" width="15" height="15" rx="2"/>
<rect x="6" y="336" width="15" height="15" rx="2"/>
<rect x="6" y="370" width="15" height="15" rx="2"/>
<rect x="6" y="404" width="15" height="15" rx="2"/>
<rect x="6" y="439" width="15" height="15" rx="2"/>
</g>
<path d="M8.5 176 C6 176 6 171.5 9 171.5 C9.5 168 15 167.5 16 170.5 C19.5 170.5 20 176 17 176 Z" fill="none" stroke="#666" stroke-width="1.1"/>
<path d="M14 170 L13 172.5 L15 172.5 Z" fill="#2b8ef0"/>
<path d="M8 203 H11.5 L12.5 204 H19 V211 H8Z" fill="#dcae62"/>
<path d="M9 209 L11.5 206.5 L13.5 208.5 L15.5 206.5 L18 209" stroke="#fff" stroke-width="0.9" fill="none"/>
<rect x="10" y="237" width="7" height="7" fill="#2b8ef0" opacity="0.8"/>
<path d="M8 237 H19 M8 244 H19 M10 235 V246 M17 235 V246" stroke="#555" stroke-width="1.1"/>
<path d="M18.5 272 A5 5 0 0 0 9 273 M8.5 277 A5 5 0 0 0 18 276" stroke="#2b8ef0" stroke-width="1.3" fill="none"/>
<path d="M8 310 V304.5 L13.5 300 L19 304.5 V310 H15.5 V306.5 H11.5 V310Z" stroke="#666" stroke-width="1" fill="none"/>
<path d="M13 304 V308" stroke="#2b8ef0" stroke-width="1.2"/>
<circle cx="13.5" cy="343.5" r="5.2" stroke="#666" stroke-width="1" fill="none"/>
<path d="M14.5 339.5 L11.5 344 H14 L12.5 348" stroke="#2b8ef0" stroke-width="1.2" fill="none"/>
<path d="M9 381 L13.5 372 L18 381 Z M13.5 381 V384 M9 381 H18" stroke="#555" stroke-width="1.1" fill="none"/>
<path d="M13.5 376 V382" stroke="#2b8ef0" stroke-width="1.3"/>
<path d="M8.5 406.5 L12.5 416.5 L15 411 M13 416.5 L18.5 406.5" stroke="#2b8ef0" stroke-width="1.6" fill="none"/>
<rect x="8.5" y="442.5" width="10" height="7.5" fill="none" stroke="#2b8ef0" stroke-width="1.2"/>
<path d="M8.5 442.5 L13.5 447 L18.5 442.5" stroke="#2b8ef0" stroke-width="1.1" fill="none"/>
</svg>
<div class="a" style="left:6px;top:182px;font-size:8.3px;line-height:10px;color:#333">云盘</div>
<div class="a" style="left:6px;top:216.5px;font-size:8.3px;line-height:10px;color:#333">图库</div>
<div class="a" style="left:6px;top:251px;font-size:8.3px;line-height:10px;color:#333">填充</div>
<div class="a" style="left:6px;top:285.5px;font-size:8.3px;line-height:10px;color:#333">转换</div>
<div class="a" style="left:6px;top:319.5px;font-size:8.3px;line-height:10px;color:#333">家装</div>
<div class="a" style="left:6px;top:354px;font-size:8.3px;line-height:10px;color:#333">弱电</div>
<div class="a" style="left:6px;top:388.5px;font-size:8.3px;line-height:10px;color:#333">园林</div>
<div class="a" style="left:6px;top:422.5px;font-size:8.3px;line-height:10px;color:#333">工具</div>
<div class="a" style="left:6px;top:457px;font-size:8.3px;line-height:10px;color:#333">反馈</div>
<div class="a" style="left:28px;top:152px;width:117px;height:158px;background:#fff;border:3px solid #3b8bf0"></div>
<div class="a" style="left:31px;top:155px;width:111px;height:17.5px;background:#f0f1f3"></div>
<div class="a" style="left:37px;top:157px;font-size:8.2px;line-height:11px;color:#333">标注设置</div>
<svg width="1280" height="720"><path d="M131 159 L137.5 165.5 M137.5 159 L131 165.5" stroke="#888" stroke-width="1"/></svg>
<div class="a" style="left:36px;top:182px;font-size:8px;line-height:11px;color:#777">标注精度:</div>
<div class="a" style="left:36px;top:203.5px;font-size:8px;line-height:11px;color:#777">文字大小:</div>
<div class="a" style="left:36px;top:225px;font-size:8px;line-height:11px;color:#777">箭头大小:</div>
<!-- row1 -->
<div class="a" style="left:73.6px;top:180.4px;width:65px;height:14px;background:#eeeeee;border:1px solid #e0e0e0;border-radius:2px"></div>
<div class="a" style="left:88.5px;top:180.4px;width:36px;height:14px;background:#ececec;border-left:1px solid #e0e0e0;border-right:1px solid #e0e0e0"></div>
<div class="a" style="left:90px;top:181px;font-size:8px;line-height:13px;color:#bbb">0.00</div>
<div class="a" style="left:75px;top:180.5px;font-size:5.5px;line-height:6.5px;color:#333;letter-spacing:-0.3px">←.0<br>.00</div>
<div class="a" style="left:126px;top:180.5px;font-size:5.5px;line-height:6.5px;color:#333;letter-spacing:-0.3px">.00<br>→.0</div>
<!-- row2 -->
<div class="a" style="left:73.6px;top:201.9px;width:65px;height:14.7px;background:#f2f2f2;border:1px solid #e2e2e2;border-radius:2px"></div>
<div class="a" style="left:88.5px;top:201.9px;width:36px;height:14.7px;background:#fff;border:1px solid #777"></div>
<div class="a" style="left:90px;top:202px;font-size:8.3px;line-height:13px;color:#222">227.39</div>
<!-- row3 -->
<div class="a" style="left:73.6px;top:223.5px;width:65px;height:14.7px;background:#f2f2f2;border:1px solid #e2e2e2;border-radius:2px"></div>
<div class="a" style="left:88.5px;top:223.5px;width:36px;height:14.7px;background:#fff;border:1px solid #777"></div>
<div class="a" style="left:90px;top:223.6px;font-size:8.3px;line-height:13px;color:#222">194.91</div>

<div class="a" style="left:50px;top:245px;width:75px;height:14.5px;background:#dcdcdc;border:1px solid #d0d0d0;border-radius:2px"></div>
<div class="a" style="left:73px;top:246px;font-size:8px;line-height:13px;color:#333">自动设置</div>
<div class="a" style="left:50px;top:267px;width:75px;height:14.5px;background:#f2f2f2;border:1px solid #dedede;border-radius:2px;font-size:8px;line-height:13px;color:#333;text-align:center">修改全图标注</div>
<div class="a" style="left:50px;top:288.6px;width:75px;height:14.5px;background:#f2f2f2;border:1px solid #dedede;border-radius:2px;font-size:8px;line-height:13px;color:#333;text-align:center">更多设置</div>
<svg width="1280" height="720"><g stroke="#222" stroke-width="1.4">
<path d="M78 209.2 H84 M78 230.8 H84 M128.5 209.2 H134.5 M131.5 206.2 V212.2 M128.5 230.8 H134.5 M131.5 227.8 V233.8"/></g>
<path d="M64 251 L66.5 253.5 L71 248.5" stroke="#2b8ef0" stroke-width="1.3" fill="none"/>
</svg><div class="a" style="left:400px;top:153px;width:58.5px;height:283px;background:#f2f2f2"></div><div class="a" style="left:418px;top:158.0px;font-size:8.3px;line-height:11px;color:#333;white-space:nowrap">线性标注</div><div class="a" style="left:418px;top:175.5px;font-size:8.3px;line-height:11px;color:#333;white-space:nowrap">弧长标注</div><div class="a" style="left:418px;top:192.5px;font-size:8.3px;line-height:11px;color:#333;white-space:nowrap">直径标注</div><div class="a" style="left:418px;top:210.0px;font-size:8.3px;line-height:11px;color:#333;white-space:nowrap">折弯标注</div><div class="a" style="left:418px;top:227.0px;font-size:8.3px;line-height:11px;color:#333;white-space:nowrap">批量标注</div><div class="a" style="left:418px;top:246.0px;font-size:8.3px;line-height:11px;color:#333;white-space:nowrap">标高标注</div><div class="a" style="left:418px;top:264.5px;font-size:8.3px;line-height:11px;color:#333;white-space:nowrap">箭头引注</div><div class="a" style="left:418px;top:282.0px;font-size:8.3px;line-height:11px;color:#333;white-space:nowrap">引出标注</div><div class="a" style="left:418px;top:299.0px;font-size:8.3px;line-height:11px;color:#333;white-space:nowrap">做法标注</div><div class="a" style="left:418px;top:316.5px;font-size:8.3px;line-height:11px;color:#333;white-space:nowrap">索引符号</div><div class="a" style="left:418px;top:334.5px;font-size:8.3px;line-height:11px;color:#333;white-space:nowrap">剖切符号</div><div class="a" style="left:418px;top:352.0px;font-size:8.3px;line-height:11px;color:#333;white-space:nowrap">索引图名</div><div class="a" style="left:418px;top:369.5px;font-size:8.3px;line-height:11px;color:#333;white-space:nowrap">加折断线</div><div class="a" style="left:418px;top:387.0px;font-size:8.3px;line-height:11px;color:#333;white-space:nowrap">绘制云线</div><div class="a" style="left:418px;top:404.5px;font-size:8.3px;line-height:11px;color:#333;white-space:nowrap">图名标注</div><div class="a" style="left:418px;top:422.5px;font-size:8.3px;line-height:11px;color:#333;white-space:nowrap">画对称轴</div><svg width="1280" height="720"><path d="M401 241.5 H457" stroke="#dadada" stroke-width="1"/><path d="M401 260.5 H457" stroke="#dadada" stroke-width="1"/><path d="M401 331 H457" stroke="#dadada" stroke-width="1"/><path d="M401 401 H457" stroke="#dadada" stroke-width="1"/><g transform="translate(408.5,163.5)" font-family="Liberation Sans"><path d="M-5 -5 V5 M5 -5 V5 M-5 0 H5" stroke="#666" stroke-width="1.1" fill="none"/></g><g transform="translate(408.5,181)" font-family="Liberation Sans"><path d="M-4 5 C-4 -1 0 -4 4 -4" stroke="#666" stroke-width="1.1" fill="none"/><circle cx="-4" cy="5" r="1.2" fill="#2b8ef0"/><circle cx="4" cy="-4" r="1.2" fill="#2b8ef0"/></g><g transform="translate(408.5,198)" font-family="Liberation Sans"><circle r="5" stroke="#666" stroke-width="1.1" fill="none"/><path d="M-3.5 -3.5 L3.5 3.5" stroke="#2b8ef0" stroke-width="1.2"/></g><g transform="translate(408.5,215.5)" font-family="Liberation Sans"><path d="M-3 -3 C0 -6 5 -3 4 2" stroke="#666" stroke-width="1.1" fill="none"/><path d="M-1 -1 L1 1 L-2 2 L0 5" stroke="#2b8ef0" stroke-width="1.1" fill="none"/></g><g transform="translate(408.5,232.5)" font-family="Liberation Sans"><rect x="-4" y="-5" width="9" height="9" stroke="#666" fill="none"/><rect x="-5" y="-3" width="9" height="8" fill="#f2f2f2" stroke="#666"/><path d="M-3 1 H2" stroke="#2b8ef0" stroke-width="1.2"/></g><g transform="translate(408.5,251.5)" font-family="Liberation Sans"><text x="-5" y="-1" font-size="5" fill="#333">±00</text><path d="M-5 2 H5 M-2 2 L0 4.5 L2 2" stroke="#2b8ef0" stroke-width="1" fill="none"/></g><g transform="translate(408.5,270)" font-family="Liberation Sans"><text x="-1" y="-1" font-size="5.5" fill="#555">A</text><path d="M-6 3 H4" stroke="#2b8ef0" stroke-width="1.1"/><circle cx="-5" cy="3" r="1.2" fill="#2b8ef0"/></g><g transform="translate(408.5,287.5)" font-family="Liberation Sans"><text x="0" y="-1" font-size="5" fill="#555">A</text><text x="0" y="5" font-size="5" fill="#555">B</text><path d="M-5 5 L0 0 H5" stroke="#2b8ef0" stroke-width="1.1" fill="none"/></g><g transform="translate(408.5,304.5)" font-family="Liberation Sans"><path d="M-5 -5 V5 M-3 -4 H5 M-3 -1.5 H5 M-3 1 H5 M-3 3.5 H5" stroke="#2b8ef0" stroke-width="1" fill="none"/></g><g transform="translate(408.5,322)" font-family="Liberation Sans"><path d="M-4 -5 V3 H2" stroke="#2b8ef0" stroke-width="1.1" fill="none"/><circle cx="3" cy="3" r="2" stroke="#2b8ef0" fill="none"/></g><g transform="translate(408.5,340)" font-family="Liberation Sans"><path d="M-6 0 H6" stroke="#2b8ef0" stroke-width="2" /><path d="M-3 -5 V5 M3 -5 V5" stroke="#666" stroke-dasharray="2 2" fill="none"/></g><g transform="translate(408.5,357.5)" font-family="Liberation Sans"><circle r="5" stroke="#666" stroke-width="1.1" fill="none"/><path d="M-5 0 H5 M0 -5 V5" stroke="#2b8ef0" stroke-width="1.1"/></g><g transform="translate(408.5,375)" font-family="Liberation Sans"><rect x="-5" y="-5" width="8" height="10" stroke="#666" fill="none"/><path d="M-2 0 H5 M3 -2 L5 0 L3 2" stroke="#2b8ef0" stroke-width="1.1" fill="none"/></g><g transform="translate(408.5,392.5)" font-family="Liberation Sans"><rect x="-5" y="-4" width="10" height="8" stroke="#666" fill="none" stroke-dasharray="1.5 1"/></g><g transform="translate(408.5,410)" font-family="Liberation Sans"><text x="-6" y="1" font-size="5" fill="#555">Ab</text><path d="M-6 3 H3" stroke="#2b8ef0" stroke-width="1.1"/><circle cx="5" cy="0" r="1" fill="#555"/></g><g transform="translate(408.5,428)" font-family="Liberation Sans"><path d="M0 -5 V5" stroke="#2b8ef0" stroke-width="1.2"/><path d="M-2.5 -5 H2.5 M-2.5 5 H2.5" stroke="#2b8ef0" stroke-width="2"/></g><path fill="#3b87e8" fill-rule="evenodd" d="M383 142.5 H462 A14 14 0 0 1 476 156.5 V431.5 A14 14 0 0 1 462 445.5 H395.2 A14 14 0 0 1 381.2 431.5 V144.5 A2 2 0 0 1 383 142.5 Z M399 153.5 H458.6 A7 7 0 0 1 465.6 160.5 V427.7 A7 7 0 0 1 458.6 434.7 H398.5 A7 7 0 0 1 391.5 427.7 V161 A7.5 7.5 0 0 1 399 153.5 Z"/><path d="M386 148 H394 M390 144 V152" stroke="#fff" stroke-width="1.5"/></svg><div class="a" style="left:28px;top:631px;width:1012px;height:12px;background:#f1f1f1;border-top:1px solid #fff"></div>
<div class="a" style="left:0;top:643px;width:1040px;height:17.5px;background:#f3f3f3;border-top:1px solid #8fb6e6"></div>
<svg width="1280" height="720">
<g stroke="#cfcfcf" stroke-width="1" fill="#f7f7f7">
<rect x="29.5" y="632" width="10.5" height="11"/><rect x="40" y="632" width="10.5" height="11"/><rect x="50.5" y="632" width="10.5" height="11"/><rect x="61" y="632" width="11" height="11"/>
</g>
<g fill="#888"><path d="M32.5 634.5 V640.5 M33 637.5 L37 634.5 V640.5Z" stroke="#888" stroke-width="0.9"/><path d="M43.5 637.5 L47 634.5 V640.5Z"/><path d="M57.5 637.5 L54 634.5 V640.5Z"/><path d="M68.5 634.5 V640.5 M68 637.5 L64 634.5 V640.5Z" stroke="#888" stroke-width="0.9"/></g>
<rect x="72" y="632" width="45" height="11" fill="#dcdcdc"/>
<path d="M117 632 V643 M165 632 V643 M208 632 V643 M220 632 V643" stroke="#bbb" stroke-width="1"/>
<path d="M28.5 643.2 H221" stroke="#6a9ad8" stroke-width="1"/>
<path d="M209.5 637.5 H218.5 M214 633 V642" stroke="#444" stroke-width="1.4"/>
</svg>
<div class="a" style="left:86px;top:632px;font-size:8.2px;line-height:11px;color:#3a8ee8">模型</div>
<div class="a" style="left:129px;top:632px;font-size:8.2px;line-height:11px;color:#333">布局1</div>
<div class="a" style="left:175px;top:632px;font-size:8.2px;line-height:11px;color:#333">布局2</div>
<svg width="1280" height="720">
<defs><clipPath id="lc2"><rect x="5" y="645" width="13.5" height="13.5" rx="2.5"/></clipPath></defs>
<g clip-path="url(#lc2)"><rect x="5" y="645" width="14" height="14" fill="#d8231f"/><path d="M5 645 H19 V650 C15 650 12 652 10 656 L5 652Z" fill="#f8c000"/><path d="M19 648 C15 649 12 652 11 657 H19Z" fill="#8cc41a"/><path d="M8 656 L16 648" stroke="#e8a850" stroke-width="2"/></g>
</svg>
<div class="a" style="left:22px;top:646px;font-size:7.9px;line-height:12px;color:#777">CAD迷你画图</div>
<div class="a" style="left:81px;top:645px;width:59px;height:14px;background:#e1e1e1;font-size:8.2px;line-height:14px;color:#333;text-align:center">功能命令表</div>
<div class="a" style="left:147px;top:645px;width:174px;height:14px;background:#f7f7f7;border:1px solid #e4e4e4;font-size:7.6px;line-height:11px;color:#aaa;padding-left:1px">输入功能或命令关键词, 快速查找功能</div>
<div class="a" style="left:321px;top:645px;width:50px;height:14px;background:#e1e1e1;font-size:8.2px;line-height:14px;color:#333;text-align:center">确定</div>
<div class="a" style="left:765.7px;top:645px;width:81px;height:14px;background:#f8f8f8;border:1px solid #e0e0e0;font-size:8px;line-height:11px;color:#aaa;padding-left:1px">查找文字</div>
<div class="a" style="left:846px;top:645px;width:18px;height:14px;background:#e4e4e4"></div>
<div class="a" style="left:867px;top:644.5px;width:15px;height:15px;background:#e2e2e2"></div>
<div class="a" style="left:924px;top:644.5px;width:15px;height:15px;background:#e2e2e2"></div>
<div class="a" style="left:962px;top:644.5px;width:15px;height:15px;background:#e2e2e2"></div>
<svg width="1280" height="720">
<circle cx="854.5" cy="651" r="3" stroke="#666" stroke-width="1" fill="none"/><path d="M856.5 653 L859 655.5" stroke="#666" stroke-width="1.2"/>
<g transform="translate(874.5,652)"><circle cx="-3" cy="-3" r="1.5" fill="#2b8ef0"/><circle cx="3" cy="-3" r="1.5" fill="none" stroke="#2b8ef0"/><circle cx="0" cy="1" r="1.5" fill="#2b8ef0"/><circle cx="-2" cy="4" r="1.5" fill="#2b8ef0"/><circle cx="2" cy="4" r="1.5" fill="#2b8ef0"/><path d="M-3 -3 L0 1 L3 -3" stroke="#2b8ef0" fill="none"/></g>
<g transform="translate(895,652)" stroke="#333" stroke-width="0.9"><path d="M-5.5 -3.75 H5.5 M-5.5 -1.25 H5.5 M-5.5 1.25 H5.5 M-5.5 3.75 H5.5 M-3.75 -5.5 V5.5 M-1.25 -5.5 V5.5 M1.25 -5.5 V5.5 M3.75 -5.5 V5.5"/></g>
<g transform="translate(912.5,652)" fill="#444"><path d="M-4 -4 h1.5v1.5h-1.5z M-1 -4 h1.5v1.5h-1.5z M2 -4 h1.5v1.5h-1.5z M-4 -1 h1.5v1.5h-1.5z M-1 -1 h1.5v1.5h-1.5z M2 -1 h1.5v1.5h-1.5z M-4 2 h1.5v1.5h-1.5z M-1 2 h1.5v1.5h-1.5z M2 2 h1.5v1.5h-1.5z"/></g>
<g transform="translate(931.5,652)"><text x="-2" y="-1" font-size="5" fill="#2b8ef0" font-family="Liberation Sans" font-weight="bold">N</text><path d="M-5 3 H-1 M1 1 L4 5 M4 1 L1 5" stroke="#2b8ef0" stroke-width="1"/></g>
<path d="M946.5 646 V657 H954 M946.5 654 H949 V657" stroke="#444" stroke-width="1" fill="none"/>
<g transform="translate(969.5,652)"><rect x="-3.5" y="-5" width="7" height="8" fill="none" stroke="#2b8ef0" stroke-width="1"/><path d="M-5 5 H5" stroke="#2b8ef0" stroke-width="1.4"/><path d="M-2 -3 L1 0" stroke="#333"/></g>
<path d="M983 652 H993 M988 647 V657" stroke="#333" stroke-width="1.2"/>
<circle cx="1007" cy="652" r="5" fill="url(#cw)" stroke="#999" stroke-width="0.6"/>
<g transform="translate(1025.5,652)"><circle r="3.8" fill="none" stroke="#444" stroke-width="1"/><ellipse rx="6.5" ry="2.2" transform="rotate(-30)" fill="none" stroke="#444" stroke-width="0.9"/></g>
</svg>
<svg width="1280" height="720">
<g stroke="#8fb0dc" stroke-width="1.2" fill="none">
<path d="M1160.8 451 V568 M1160.8 596 V714 M1033 582.5 H1147.5 M1174 582.5 H1280"/>
<rect x="1147.5" y="569" width="27" height="27"/>
</g>
</svg>
<div class="a" style="left:1053px;top:309.5px;font-size:36px;font-weight:900;color:#fff;-webkit-text-stroke:0.3px #fff;letter-spacing:1px;transform:skewX(-8deg);white-space:nowrap;line-height:48px">标注测量</div>
<div class="a" style="left:1078.5px;top:363px;font-size:36px;font-weight:900;color:#fff;-webkit-text-stroke:0.3px #fff;letter-spacing:1px;transform:skewX(-8deg);white-space:nowrap;line-height:48px">智能全面</div>
<svg width="1280" height="720">
<defs><clipPath id="lc"><rect x="1177.8" y="31" width="51" height="52.3" rx="9"/></clipPath>
<linearGradient id="rdg" x1="0" y1="0" x2="1" y2="0"><stop offset="0" stop-color="#e02020"/><stop offset="1" stop-color="#b81818"/></linearGradient></defs>
<g clip-path="url(#lc)">
<rect x="1170" y="25" width="70" height="70" fill="url(#rdg)"/>
<path d="M1170 25 H1240 V68 C1225 72 1210 74 1200 74 C1192 68 1184 58 1178 45 L1170 40 Z" fill="#f8c400"/>
<path d="M1240 38 C1222 40 1208 52 1200 72 C1212 74 1228 74 1240 73 Z" fill="#8ccc10"/>
<path d="M1176 43 C1182 52 1188 60 1194 66 L1190 70 C1184 64 1178 56 1174 50 Z" fill="#fff"/>
</g>
<g transform="rotate(-45 1203 57)">
<rect x="1182" y="53.5" width="36" height="7.5" fill="#eab060"/>
<rect x="1182" y="57.5" width="36" height="3.5" fill="#c98a40"/>
<rect x="1216" y="53.5" width="6" height="7.5" rx="1" fill="#e08070"/>
<path d="M1182 53.5 L1173 57.2 L1182 61Z" fill="#f5e0b8"/>
<path d="M1175.5 56.2 L1173 57.2 L1175.5 58.2Z" fill="#333"/>
</g>
</svg>

</body></html>
